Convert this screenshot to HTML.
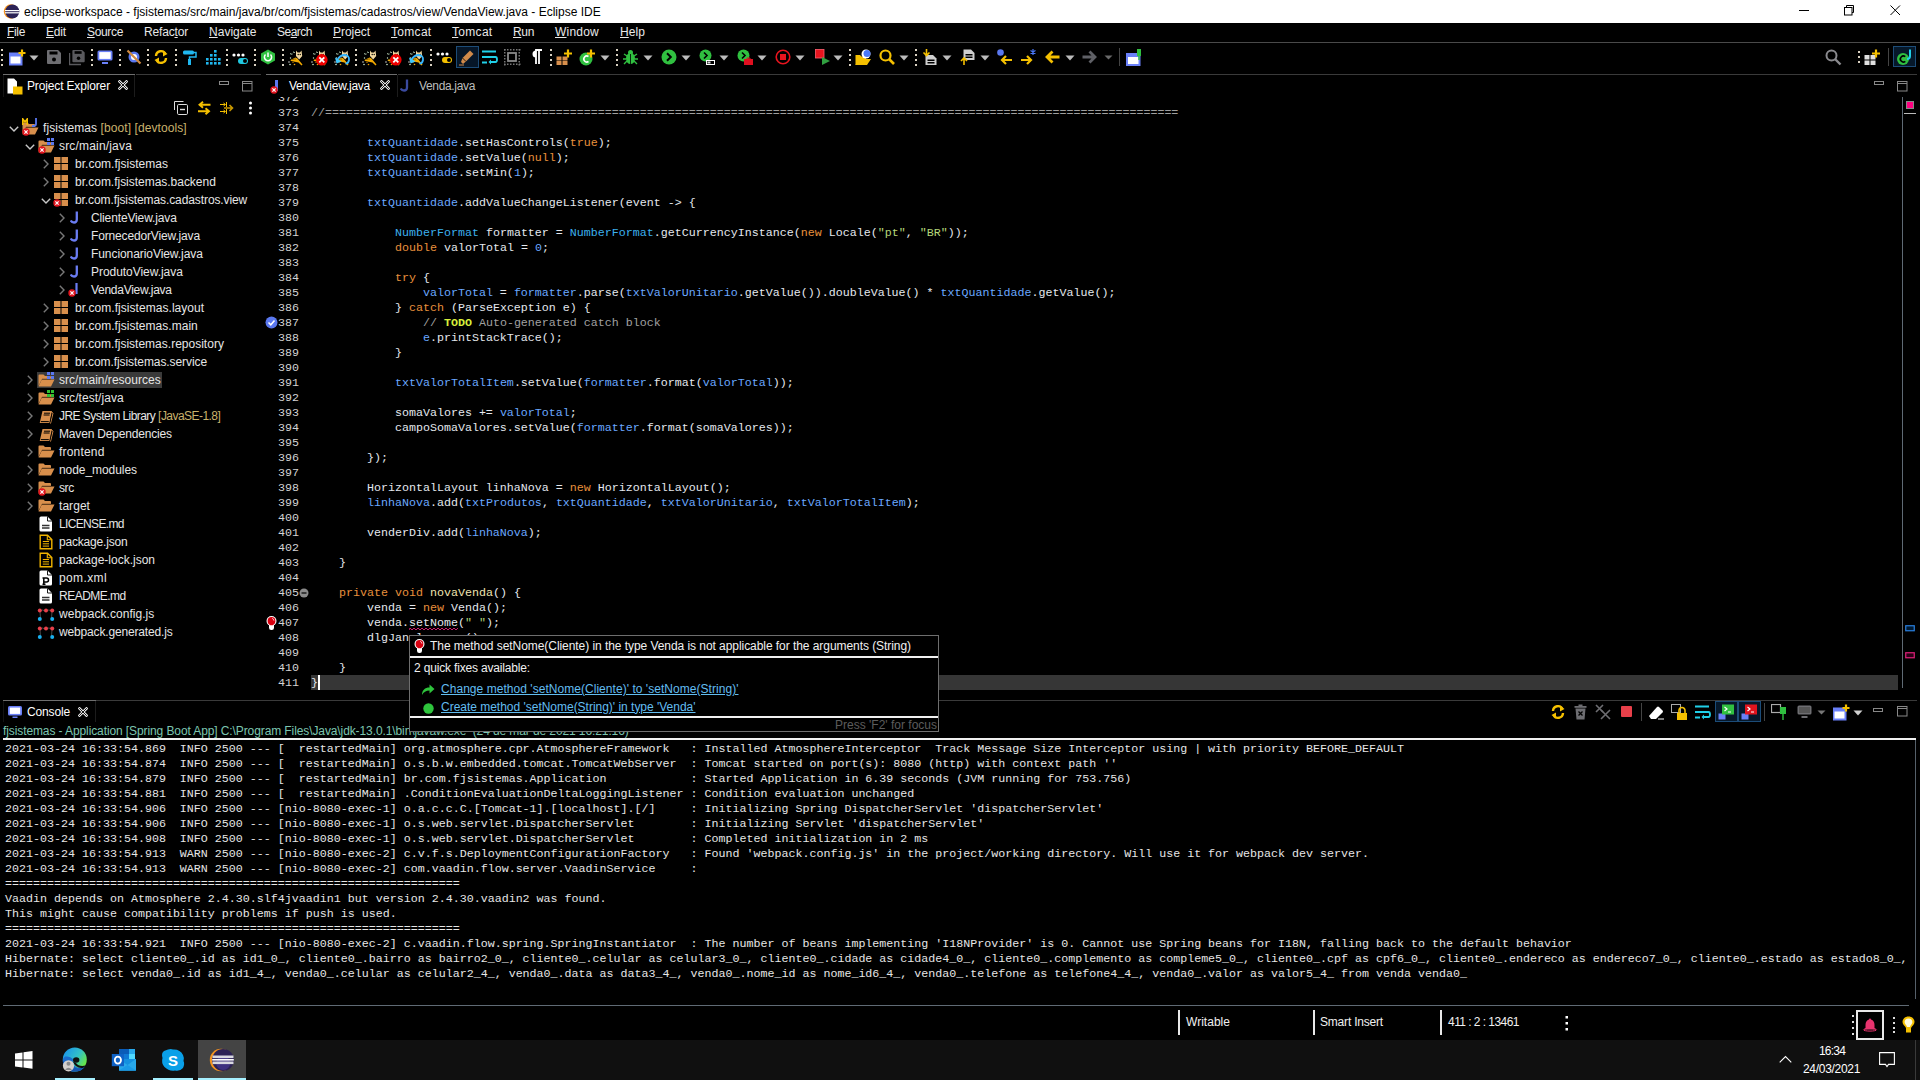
<!DOCTYPE html><html><head><meta charset="utf-8"><style>
html,body{margin:0;padding:0;background:#000;width:1920px;height:1080px;overflow:hidden;position:relative}
u{text-decoration:underline;text-underline-offset:1px}
</style></head><body><div style="position:absolute;left:0px;top:0px;width:1920px;height:23px;background:#fff;"></div>
<svg style="position:absolute;left:3px;top:3px;" width="17" height="17" viewBox="0 0 17 17"><circle cx="8" cy="8.5" r="7.2" fill="#f7941e"/><circle cx="9.3" cy="8.5" r="7" fill="#2c2255"/><rect x="2" y="7" width="14" height="1.2" fill="#fff"/><rect x="2" y="9.2" width="14" height="1.2" fill="#fff"/></svg>
<div style="position:absolute;left:24px;top:5.800000000000001px;font:12px/12px 'Liberation Sans', sans-serif;color:#000;white-space:pre;">eclipse-workspace - fjsistemas/src/main/java/br/com/fjsistemas/cadastros/view/VendaView.java - Eclipse IDE</div>
<div style="position:absolute;left:1799px;top:10px;width:10px;height:1px;background:#000;"></div>
<svg style="position:absolute;left:1844px;top:5px;" width="11" height="11" viewBox="0 0 11 11"><rect x="0.5" y="2.5" width="7.5" height="7.5" fill="none" stroke="#000"/><path d="M2.5 2.5V0.5H9.5V7.5H8" fill="none" stroke="#000"/></svg>
<svg style="position:absolute;left:1890px;top:5px;" width="11" height="11" viewBox="0 0 11 11"><path d="M0.5 0.5L10 10M10 0.5L0.5 10" stroke="#000" stroke-width="1"/></svg>
<div style="position:absolute;left:0px;top:23px;width:1920px;height:19px;background:#000;"></div>
<div style="position:absolute;left:0px;top:42px;width:1920px;height:1px;background:#4a4a4a;"></div>
<div style="position:absolute;left:7px;top:25.8px;font:12px/12px 'Liberation Sans', sans-serif;color:#e8e8e8;white-space:pre;letter-spacing:-0.334px;"><u>F</u>ile</div>
<div style="position:absolute;left:46px;top:25.8px;font:12px/12px 'Liberation Sans', sans-serif;color:#e8e8e8;white-space:pre;letter-spacing:-0.169px;"><u>E</u>dit</div>
<div style="position:absolute;left:87px;top:25.8px;font:12px/12px 'Liberation Sans', sans-serif;color:#e8e8e8;white-space:pre;letter-spacing:-0.337px;"><u>S</u>ource</div>
<div style="position:absolute;left:144px;top:25.8px;font:12px/12px 'Liberation Sans', sans-serif;color:#e8e8e8;white-space:pre;letter-spacing:-0.169px;">Refac<u>t</u>or</div>
<div style="position:absolute;left:209px;top:25.8px;font:12px/12px 'Liberation Sans', sans-serif;color:#e8e8e8;white-space:pre;letter-spacing:0.017px;"><u>N</u>avigate</div>
<div style="position:absolute;left:277px;top:25.8px;font:12px/12px 'Liberation Sans', sans-serif;color:#e8e8e8;white-space:pre;letter-spacing:-0.504px;">Se<u>a</u>rch</div>
<div style="position:absolute;left:333px;top:25.8px;font:12px/12px 'Liberation Sans', sans-serif;color:#e8e8e8;white-space:pre;letter-spacing:-0.050px;"><u>P</u>roject</div>
<div style="position:absolute;left:391px;top:25.8px;font:12px/12px 'Liberation Sans', sans-serif;color:#e8e8e8;white-space:pre;letter-spacing:0.304px;"><u>T</u>omcat</div>
<div style="position:absolute;left:452px;top:25.8px;font:12px/12px 'Liberation Sans', sans-serif;color:#e8e8e8;white-space:pre;letter-spacing:0.304px;"><u>T</u>omcat</div>
<div style="position:absolute;left:513px;top:25.8px;font:12px/12px 'Liberation Sans', sans-serif;color:#e8e8e8;white-space:pre;letter-spacing:-0.338px;"><u>R</u>un</div>
<div style="position:absolute;left:555px;top:25.8px;font:12px/12px 'Liberation Sans', sans-serif;color:#e8e8e8;white-space:pre;letter-spacing:0.220px;"><u>W</u>indow</div>
<div style="position:absolute;left:620px;top:25.8px;font:12px/12px 'Liberation Sans', sans-serif;color:#e8e8e8;white-space:pre;letter-spacing:0.080px;"><u>H</u>elp</div>
<div style="position:absolute;left:3px;top:74px;width:132px;height:1px;background:#6e6e6e;"></div>
<div style="position:absolute;left:134px;top:75px;width:1px;height:22px;background:#1c1c1c;"></div>
<div style="position:absolute;left:3px;top:75px;width:1px;height:22px;background:#141414;"></div>
<div style="position:absolute;left:136px;top:74px;width:125px;height:1px;background:#3a3a3a;"></div>
<svg style="position:absolute;left:7px;top:78px;" width="16" height="17" viewBox="0 0 16 17"><path d="M0.5 0.5H7L10 3.5V9H6V15.5H0.5Z" fill="#fff"/><path d="M6 8.5H15.5V16.5H6Z" fill="#f5c000"/></svg>
<div style="position:absolute;left:27px;top:79.8px;font:12px/12px 'Liberation Sans', sans-serif;color:#fff;white-space:pre;letter-spacing:-0.148px;">Project Explorer</div>
<svg style="position:absolute;left:118px;top:80px;" width="10" height="10" viewBox="0 0 10 10"><path d="M1.5 1.5L8.5 8.5M8.5 1.5L1.5 8.5" stroke="#e8e8e8" stroke-width="2.6" stroke-linecap="square"/><path d="M1.5 1.5L8.5 8.5M8.5 1.5L1.5 8.5" stroke="#000" stroke-width="0.9" stroke-linecap="square"/></svg>
<svg style="position:absolute;left:219px;top:81px;" width="11" height="5" viewBox="0 0 11 5"><rect x="0.5" y="0.5" width="9" height="3" fill="none" stroke="#888"/></svg>
<svg style="position:absolute;left:242px;top:81px;" width="11" height="11" viewBox="0 0 11 11"><rect x="0.5" y="0.5" width="9.5" height="9.5" fill="none" stroke="#888"/><path d="M0.5 2.5H10" stroke="#888"/></svg>
<svg style="position:absolute;left:173px;top:100px;" width="16" height="16" viewBox="0 0 16 16"><path d="M1.5 10V1.5H10.5" fill="none" stroke="#ddd" stroke-width="1"/><rect x="4.5" y="4.5" width="10" height="10" rx="1.2" fill="#000" stroke="#ddd" stroke-width="1"/><path d="M7 9.5H12" stroke="#ddd" stroke-width="1.4"/></svg>
<svg style="position:absolute;left:197px;top:101px;" width="16" height="14" viewBox="0 0 16 14"><path d="M13.5 3.8H3M6 0.8L2.5 3.8L6 6.8M1 10.2H11.5M8.5 7.2L12 10.2L8.5 13.2" fill="none" stroke="#f5c000" stroke-width="1.9"/></svg>
<svg style="position:absolute;left:219px;top:101px;" width="16" height="14" viewBox="0 0 16 14"><path d="M1 3.5H6M1 10.5H6M4.5 2L6.5 3.5L4.5 5M4.5 9L6.5 10.5L4.5 12M7.5 1V6M7.5 8V13" fill="none" stroke="#f5c000" stroke-width="1"/><path d="M5 7H13M10.5 4L13.5 7L10.5 10" fill="none" stroke="#c89800" stroke-width="1.6"/></svg>
<svg style="position:absolute;left:248px;top:101px;" width="5" height="14" viewBox="0 0 5 14"><circle cx="2.5" cy="2" r="1.5" fill="#fff"/><circle cx="2.5" cy="7" r="1.5" fill="#fff"/><circle cx="2.5" cy="12" r="1.5" fill="#fff"/></svg>
<svg style="position:absolute;left:9px;top:126px;" width="10" height="6" viewBox="0 0 10 6"><path d="M0.8 0.8L5 5L9.2 0.8" fill="none" stroke="#c8c8c8" stroke-width="1.4"/></svg>
<svg style="position:absolute;left:22px;top:121px;" width="17" height="15" viewBox="0 0 17 15"><path d="M0.5 2.5Q0.5 1.5 1.5 1.5H5.5L7 3H12Q13 3 13 4V6H4L0.5 13Z" fill="#d88f4c"/><path d="M3.8 6.5H16.5L13 13.5H0.5Z" fill="#d88f4c"/><path d="M4 6.2H13" stroke="#5a3a1a" stroke-width="0.8"/></svg>
<svg style="position:absolute;left:22px;top:118px;" width="17" height="9" viewBox="0 0 17 9"><path d="M0.8 7V1L3 4L5.2 1V7" fill="none" stroke="#f5c000" stroke-width="1.6"/><path d="M14 0V6Q14 8 11.5 8H10" fill="none" stroke="#5a78f0" stroke-width="1.8"/></svg>
<svg style="position:absolute;left:22px;top:128px;" width="8" height="8" viewBox="0 0 8 8"><circle cx="4" cy="4" r="3.7" fill="#e0141e"/><path d="M2.4 2.4L5.6 5.6M5.6 2.4L2.4 5.6" stroke="#fff" stroke-width="1.2"/></svg>
<div style="position:absolute;left:43px;top:121.8px;font:12px/12px 'Liberation Sans', sans-serif;color:#e6e6e6;white-space:pre;letter-spacing:0.082px;">fjsistemas<span style="color:#c9b26d"> [boot] [devtools]</span></div>
<svg style="position:absolute;left:25px;top:144px;" width="10" height="6" viewBox="0 0 10 6"><path d="M0.8 0.8L5 5L9.2 0.8" fill="none" stroke="#c8c8c8" stroke-width="1.4"/></svg>
<svg style="position:absolute;left:38px;top:139px;" width="17" height="15" viewBox="0 0 17 15"><path d="M0.5 2.5Q0.5 1.5 1.5 1.5H5.5L7 3H12Q13 3 13 4V6H4L0.5 13Z" fill="#d88f4c"/><path d="M3.8 6.5H16.5L13 13.5H0.5Z" fill="#d88f4c"/><path d="M4 6.2H13" stroke="#5a3a1a" stroke-width="0.8"/></svg>
<svg style="position:absolute;left:47px;top:138px;" width="7" height="7" viewBox="0 0 7 7"><rect x="0" y="0" width="3" height="3" fill="#5a78f0"/><rect x="4" y="0" width="3" height="3" fill="#5a78f0"/><rect x="0" y="4" width="3" height="3" fill="#5a78f0"/><rect x="4" y="4" width="3" height="3" fill="#5a78f0"/></svg>
<svg style="position:absolute;left:38px;top:146px;" width="8" height="8" viewBox="0 0 8 8"><circle cx="4" cy="4" r="3.7" fill="#e0141e"/><path d="M2.4 2.4L5.6 5.6M5.6 2.4L2.4 5.6" stroke="#fff" stroke-width="1.2"/></svg>
<div style="position:absolute;left:59px;top:139.8px;font:12px/12px 'Liberation Sans', sans-serif;color:#e6e6e6;white-space:pre;letter-spacing:0.178px;">src/main/java</div>
<svg style="position:absolute;left:43px;top:159px;" width="6" height="10" viewBox="0 0 6 10"><path d="M0.8 0.8L5 5L0.8 9.2" fill="none" stroke="#787878" stroke-width="1.4"/></svg>
<svg style="position:absolute;left:54px;top:157px;" width="14" height="13" viewBox="0 0 14 13"><rect x="0" y="0" width="6.5" height="6" fill="#d88f4c"/><rect x="7.5" y="0" width="6.5" height="6" fill="#d88f4c"/><rect x="0" y="7" width="6.5" height="6" fill="#d88f4c"/><rect x="7.5" y="7" width="6.5" height="6" fill="#d88f4c"/></svg>
<div style="position:absolute;left:75px;top:157.8px;font:12px/12px 'Liberation Sans', sans-serif;color:#e6e6e6;white-space:pre;letter-spacing:0.018px;">br.com.fjsistemas</div>
<svg style="position:absolute;left:43px;top:177px;" width="6" height="10" viewBox="0 0 6 10"><path d="M0.8 0.8L5 5L0.8 9.2" fill="none" stroke="#787878" stroke-width="1.4"/></svg>
<svg style="position:absolute;left:54px;top:175px;" width="14" height="13" viewBox="0 0 14 13"><rect x="0" y="0" width="6.5" height="6" fill="#d88f4c"/><rect x="7.5" y="0" width="6.5" height="6" fill="#d88f4c"/><rect x="0" y="7" width="6.5" height="6" fill="#d88f4c"/><rect x="7.5" y="7" width="6.5" height="6" fill="#d88f4c"/></svg>
<div style="position:absolute;left:75px;top:175.8px;font:12px/12px 'Liberation Sans', sans-serif;color:#e6e6e6;white-space:pre;letter-spacing:-0.024px;">br.com.fjsistemas.backend</div>
<svg style="position:absolute;left:41px;top:198px;" width="10" height="6" viewBox="0 0 10 6"><path d="M0.8 0.8L5 5L9.2 0.8" fill="none" stroke="#c8c8c8" stroke-width="1.4"/></svg>
<svg style="position:absolute;left:54px;top:193px;" width="14" height="13" viewBox="0 0 14 13"><rect x="0" y="0" width="6.5" height="6" fill="#d88f4c"/><rect x="7.5" y="0" width="6.5" height="6" fill="#d88f4c"/><rect x="0" y="7" width="6.5" height="6" fill="#d88f4c"/><rect x="7.5" y="7" width="6.5" height="6" fill="#d88f4c"/></svg>
<svg style="position:absolute;left:53px;top:199px;" width="8" height="8" viewBox="0 0 8 8"><circle cx="4" cy="4" r="3.7" fill="#e0141e"/><path d="M2.4 2.4L5.6 5.6M5.6 2.4L2.4 5.6" stroke="#fff" stroke-width="1.2"/></svg>
<div style="position:absolute;left:75px;top:193.8px;font:12px/12px 'Liberation Sans', sans-serif;color:#e6e6e6;white-space:pre;letter-spacing:-0.100px;">br.com.fjsistemas.cadastros.view</div>
<svg style="position:absolute;left:59px;top:213px;" width="6" height="10" viewBox="0 0 6 10"><path d="M0.8 0.8L5 5L0.8 9.2" fill="none" stroke="#787878" stroke-width="1.4"/></svg>
<svg style="position:absolute;left:70px;top:211px;" width="10" height="13" viewBox="0 0 10 13"><path d="M6.8 0.5V8.5Q6.8 11.5 4 11.5Q1.5 11.5 0.8 9.5" stroke="#6a7cf2" stroke-width="2.3" fill="none"/></svg>
<div style="position:absolute;left:91px;top:211.8px;font:12px/12px 'Liberation Sans', sans-serif;color:#e6e6e6;white-space:pre;letter-spacing:-0.133px;">ClienteView.java</div>
<svg style="position:absolute;left:59px;top:231px;" width="6" height="10" viewBox="0 0 6 10"><path d="M0.8 0.8L5 5L0.8 9.2" fill="none" stroke="#787878" stroke-width="1.4"/></svg>
<svg style="position:absolute;left:70px;top:229px;" width="10" height="13" viewBox="0 0 10 13"><path d="M6.8 0.5V8.5Q6.8 11.5 4 11.5Q1.5 11.5 0.8 9.5" stroke="#6a7cf2" stroke-width="2.3" fill="none"/></svg>
<div style="position:absolute;left:91px;top:229.8px;font:12px/12px 'Liberation Sans', sans-serif;color:#e6e6e6;white-space:pre;letter-spacing:-0.150px;">FornecedorView.java</div>
<svg style="position:absolute;left:59px;top:249px;" width="6" height="10" viewBox="0 0 6 10"><path d="M0.8 0.8L5 5L0.8 9.2" fill="none" stroke="#787878" stroke-width="1.4"/></svg>
<svg style="position:absolute;left:70px;top:247px;" width="10" height="13" viewBox="0 0 10 13"><path d="M6.8 0.5V8.5Q6.8 11.5 4 11.5Q1.5 11.5 0.8 9.5" stroke="#6a7cf2" stroke-width="2.3" fill="none"/></svg>
<div style="position:absolute;left:91px;top:247.8px;font:12px/12px 'Liberation Sans', sans-serif;color:#e6e6e6;white-space:pre;letter-spacing:-0.069px;">FuncionarioView.java</div>
<svg style="position:absolute;left:59px;top:267px;" width="6" height="10" viewBox="0 0 6 10"><path d="M0.8 0.8L5 5L0.8 9.2" fill="none" stroke="#787878" stroke-width="1.4"/></svg>
<svg style="position:absolute;left:70px;top:265px;" width="10" height="13" viewBox="0 0 10 13"><path d="M6.8 0.5V8.5Q6.8 11.5 4 11.5Q1.5 11.5 0.8 9.5" stroke="#6a7cf2" stroke-width="2.3" fill="none"/></svg>
<div style="position:absolute;left:91px;top:265.8px;font:12px/12px 'Liberation Sans', sans-serif;color:#e6e6e6;white-space:pre;letter-spacing:-0.044px;">ProdutoView.java</div>
<svg style="position:absolute;left:59px;top:285px;" width="6" height="10" viewBox="0 0 6 10"><path d="M0.8 0.8L5 5L0.8 9.2" fill="none" stroke="#787878" stroke-width="1.4"/></svg>
<svg style="position:absolute;left:70px;top:283px;" width="10" height="13" viewBox="0 0 10 13"><path d="M6.5 0V11" stroke="#6a7cf2" stroke-width="2.2" fill="none"/></svg>
<svg style="position:absolute;left:68px;top:289px;" width="8" height="8" viewBox="0 0 8 8"><circle cx="4" cy="4" r="3.7" fill="#e0141e"/><path d="M2.4 2.4L5.6 5.6M5.6 2.4L2.4 5.6" stroke="#fff" stroke-width="1.2"/></svg>
<div style="position:absolute;left:91px;top:283.8px;font:12px/12px 'Liberation Sans', sans-serif;color:#e6e6e6;white-space:pre;letter-spacing:-0.273px;">VendaView.java</div>
<svg style="position:absolute;left:43px;top:303px;" width="6" height="10" viewBox="0 0 6 10"><path d="M0.8 0.8L5 5L0.8 9.2" fill="none" stroke="#787878" stroke-width="1.4"/></svg>
<svg style="position:absolute;left:54px;top:301px;" width="14" height="13" viewBox="0 0 14 13"><rect x="0" y="0" width="6.5" height="6" fill="#d88f4c"/><rect x="7.5" y="0" width="6.5" height="6" fill="#d88f4c"/><rect x="0" y="7" width="6.5" height="6" fill="#d88f4c"/><rect x="7.5" y="7" width="6.5" height="6" fill="#d88f4c"/></svg>
<div style="position:absolute;left:75px;top:301.8px;font:12px/12px 'Liberation Sans', sans-serif;color:#e6e6e6;white-space:pre;letter-spacing:0.048px;">br.com.fjsistemas.layout</div>
<svg style="position:absolute;left:43px;top:321px;" width="6" height="10" viewBox="0 0 6 10"><path d="M0.8 0.8L5 5L0.8 9.2" fill="none" stroke="#787878" stroke-width="1.4"/></svg>
<svg style="position:absolute;left:54px;top:319px;" width="14" height="13" viewBox="0 0 14 13"><rect x="0" y="0" width="6.5" height="6" fill="#d88f4c"/><rect x="7.5" y="0" width="6.5" height="6" fill="#d88f4c"/><rect x="0" y="7" width="6.5" height="6" fill="#d88f4c"/><rect x="7.5" y="7" width="6.5" height="6" fill="#d88f4c"/></svg>
<div style="position:absolute;left:75px;top:319.8px;font:12px/12px 'Liberation Sans', sans-serif;color:#e6e6e6;white-space:pre;letter-spacing:0.035px;">br.com.fjsistemas.main</div>
<svg style="position:absolute;left:43px;top:339px;" width="6" height="10" viewBox="0 0 6 10"><path d="M0.8 0.8L5 5L0.8 9.2" fill="none" stroke="#787878" stroke-width="1.4"/></svg>
<svg style="position:absolute;left:54px;top:337px;" width="14" height="13" viewBox="0 0 14 13"><rect x="0" y="0" width="6.5" height="6" fill="#d88f4c"/><rect x="7.5" y="0" width="6.5" height="6" fill="#d88f4c"/><rect x="0" y="7" width="6.5" height="6" fill="#d88f4c"/><rect x="7.5" y="7" width="6.5" height="6" fill="#d88f4c"/></svg>
<div style="position:absolute;left:75px;top:337.8px;font:12px/12px 'Liberation Sans', sans-serif;color:#e6e6e6;white-space:pre;letter-spacing:0.007px;">br.com.fjsistemas.repository</div>
<svg style="position:absolute;left:43px;top:357px;" width="6" height="10" viewBox="0 0 6 10"><path d="M0.8 0.8L5 5L0.8 9.2" fill="none" stroke="#787878" stroke-width="1.4"/></svg>
<svg style="position:absolute;left:54px;top:355px;" width="14" height="13" viewBox="0 0 14 13"><rect x="0" y="0" width="6.5" height="6" fill="#d88f4c"/><rect x="7.5" y="0" width="6.5" height="6" fill="#d88f4c"/><rect x="0" y="7" width="6.5" height="6" fill="#d88f4c"/><rect x="7.5" y="7" width="6.5" height="6" fill="#d88f4c"/></svg>
<div style="position:absolute;left:75px;top:355.8px;font:12px/12px 'Liberation Sans', sans-serif;color:#e6e6e6;white-space:pre;letter-spacing:-0.081px;">br.com.fjsistemas.service</div>
<svg style="position:absolute;left:27px;top:375px;" width="6" height="10" viewBox="0 0 6 10"><path d="M0.8 0.8L5 5L0.8 9.2" fill="none" stroke="#787878" stroke-width="1.4"/></svg>
<div style="position:absolute;left:37px;top:372px;width:125px;height:16px;background:#3a3a3a;"></div>
<svg style="position:absolute;left:38px;top:373px;" width="17" height="15" viewBox="0 0 17 15"><path d="M0.5 2.5Q0.5 1.5 1.5 1.5H5.5L7 3H12Q13 3 13 4V6H4L0.5 13Z" fill="#d88f4c"/><path d="M3.8 6.5H16.5L13 13.5H0.5Z" fill="#d88f4c"/><path d="M4 6.2H13" stroke="#5a3a1a" stroke-width="0.8"/></svg>
<svg style="position:absolute;left:47px;top:372px;" width="7" height="7" viewBox="0 0 7 7"><rect x="0" y="0" width="3" height="3" fill="#5a78f0"/><rect x="4" y="0" width="3" height="3" fill="#5a78f0"/><rect x="0" y="4" width="3" height="3" fill="#5a78f0"/><rect x="4" y="4" width="3" height="3" fill="#5a78f0"/></svg>
<div style="position:absolute;left:59px;top:373.8px;font:12px/12px 'Liberation Sans', sans-serif;color:#e6e6e6;white-space:pre;letter-spacing:0.022px;">src/main/resources</div>
<svg style="position:absolute;left:27px;top:393px;" width="6" height="10" viewBox="0 0 6 10"><path d="M0.8 0.8L5 5L0.8 9.2" fill="none" stroke="#787878" stroke-width="1.4"/></svg>
<svg style="position:absolute;left:38px;top:391px;" width="17" height="15" viewBox="0 0 17 15"><path d="M0.5 2.5Q0.5 1.5 1.5 1.5H5.5L7 3H12Q13 3 13 4V6H4L0.5 13Z" fill="#d88f4c"/><path d="M3.8 6.5H16.5L13 13.5H0.5Z" fill="#d88f4c"/><path d="M4 6.2H13" stroke="#5a3a1a" stroke-width="0.8"/></svg>
<svg style="position:absolute;left:47px;top:390px;" width="7" height="7" viewBox="0 0 7 7"><rect x="0" y="0" width="3" height="3" fill="#30c030"/><rect x="4" y="0" width="3" height="3" fill="#30c030"/><rect x="0" y="4" width="3" height="3" fill="#30c030"/><rect x="4" y="4" width="3" height="3" fill="#30c030"/></svg>
<div style="position:absolute;left:59px;top:391.8px;font:12px/12px 'Liberation Sans', sans-serif;color:#e6e6e6;white-space:pre;letter-spacing:0.056px;">src/test/java</div>
<svg style="position:absolute;left:27px;top:411px;" width="6" height="10" viewBox="0 0 6 10"><path d="M0.8 0.8L5 5L0.8 9.2" fill="none" stroke="#787878" stroke-width="1.4"/></svg>
<svg style="position:absolute;left:39px;top:410px;" width="15" height="14" viewBox="0 0 15 14"><path d="M3.5 1H12.5Q13 1 13 1.5L10.5 12.5Q10.4 13 10 13H1.2Q0.6 13 0.8 12.4Z" fill="#d88f4c"/><path d="M13 2.5L14 3L11.5 13.5" stroke="#d88f4c" stroke-width="1" fill="none"/><path d="M5 3.2H11M4.6 5H10.6M1.8 11.6H9.8" stroke="#000" stroke-width="1"/><path d="M11 12.5L13 3" stroke="#000" stroke-width="0.7"/></svg>
<div style="position:absolute;left:59px;top:409.8px;font:12px/12px 'Liberation Sans', sans-serif;color:#e6e6e6;white-space:pre;letter-spacing:-0.541px;">JRE System Library<span style="color:#c9b26d"> [JavaSE-1.8]</span></div>
<svg style="position:absolute;left:27px;top:429px;" width="6" height="10" viewBox="0 0 6 10"><path d="M0.8 0.8L5 5L0.8 9.2" fill="none" stroke="#787878" stroke-width="1.4"/></svg>
<svg style="position:absolute;left:39px;top:428px;" width="15" height="14" viewBox="0 0 15 14"><path d="M3.5 1H12.5Q13 1 13 1.5L10.5 12.5Q10.4 13 10 13H1.2Q0.6 13 0.8 12.4Z" fill="#d88f4c"/><path d="M13 2.5L14 3L11.5 13.5" stroke="#d88f4c" stroke-width="1" fill="none"/><path d="M5 3.2H11M4.6 5H10.6M1.8 11.6H9.8" stroke="#000" stroke-width="1"/><path d="M11 12.5L13 3" stroke="#000" stroke-width="0.7"/></svg>
<div style="position:absolute;left:59px;top:427.8px;font:12px/12px 'Liberation Sans', sans-serif;color:#e6e6e6;white-space:pre;letter-spacing:-0.176px;">Maven Dependencies</div>
<svg style="position:absolute;left:27px;top:447px;" width="6" height="10" viewBox="0 0 6 10"><path d="M0.8 0.8L5 5L0.8 9.2" fill="none" stroke="#787878" stroke-width="1.4"/></svg>
<svg style="position:absolute;left:38px;top:444px;" width="17" height="15" viewBox="0 0 17 15"><path d="M0.5 2.5Q0.5 1.5 1.5 1.5H5.5L7 3H12Q13 3 13 4V6H4L0.5 13Z" fill="#d88f4c"/><path d="M3.8 6.5H16.5L13 13.5H0.5Z" fill="#d88f4c"/><path d="M4 6.2H13" stroke="#5a3a1a" stroke-width="0.8"/></svg>
<div style="position:absolute;left:59px;top:445.8px;font:12px/12px 'Liberation Sans', sans-serif;color:#e6e6e6;white-space:pre;letter-spacing:0.183px;">frontend</div>
<svg style="position:absolute;left:27px;top:465px;" width="6" height="10" viewBox="0 0 6 10"><path d="M0.8 0.8L5 5L0.8 9.2" fill="none" stroke="#787878" stroke-width="1.4"/></svg>
<svg style="position:absolute;left:38px;top:462px;" width="17" height="15" viewBox="0 0 17 15"><path d="M0.5 2.5Q0.5 1.5 1.5 1.5H5.5L7 3H12Q13 3 13 4V6H4L0.5 13Z" fill="#d88f4c"/><path d="M3.8 6.5H16.5L13 13.5H0.5Z" fill="#d88f4c"/><path d="M4 6.2H13" stroke="#5a3a1a" stroke-width="0.8"/></svg>
<div style="position:absolute;left:59px;top:463.8px;font:12px/12px 'Liberation Sans', sans-serif;color:#e6e6e6;white-space:pre;letter-spacing:-0.061px;">node_modules</div>
<svg style="position:absolute;left:27px;top:483px;" width="6" height="10" viewBox="0 0 6 10"><path d="M0.8 0.8L5 5L0.8 9.2" fill="none" stroke="#787878" stroke-width="1.4"/></svg>
<svg style="position:absolute;left:38px;top:480px;" width="17" height="15" viewBox="0 0 17 15"><path d="M0.5 2.5Q0.5 1.5 1.5 1.5H5.5L7 3H12Q13 3 13 4V6H4L0.5 13Z" fill="#d88f4c"/><path d="M3.8 6.5H16.5L13 13.5H0.5Z" fill="#d88f4c"/><path d="M4 6.2H13" stroke="#5a3a1a" stroke-width="0.8"/></svg>
<svg style="position:absolute;left:38px;top:488px;" width="8" height="8" viewBox="0 0 8 8"><circle cx="4" cy="4" r="3.7" fill="#e0141e"/><path d="M2.4 2.4L5.6 5.6M5.6 2.4L2.4 5.6" stroke="#fff" stroke-width="1.2"/></svg>
<div style="position:absolute;left:59px;top:481.8px;font:12px/12px 'Liberation Sans', sans-serif;color:#e6e6e6;white-space:pre;letter-spacing:-0.415px;">src</div>
<svg style="position:absolute;left:27px;top:501px;" width="6" height="10" viewBox="0 0 6 10"><path d="M0.8 0.8L5 5L0.8 9.2" fill="none" stroke="#787878" stroke-width="1.4"/></svg>
<svg style="position:absolute;left:38px;top:498px;" width="17" height="15" viewBox="0 0 17 15"><path d="M0.5 2.5Q0.5 1.5 1.5 1.5H5.5L7 3H12Q13 3 13 4V6H4L0.5 13Z" fill="#d88f4c"/><path d="M3.8 6.5H16.5L13 13.5H0.5Z" fill="#d88f4c"/><path d="M4 6.2H13" stroke="#5a3a1a" stroke-width="0.8"/></svg>
<div style="position:absolute;left:59px;top:499.8px;font:12px/12px 'Liberation Sans', sans-serif;color:#e6e6e6;white-space:pre;letter-spacing:0.052px;">target</div>
<svg style="position:absolute;left:39px;top:516px;" width="14" height="16" viewBox="0 0 14 16"><path d="M2 0.5H8.5L13 5V14Q13 15.5 11.5 15.5H2Q0.5 15.5 0.5 14V2Q0.5 0.5 2 0.5Z" fill="#fff"/><path d="M8.5 0.5V5H13" fill="none" stroke="#000" stroke-width="0.9"/><path d="M3 9.5H10.5M3 12H10.5" stroke="#333" stroke-width="1.3"/></svg>
<div style="position:absolute;left:59px;top:517.8px;font:12px/12px 'Liberation Sans', sans-serif;color:#e6e6e6;white-space:pre;letter-spacing:-0.661px;">LICENSE.md</div>
<svg style="position:absolute;left:39px;top:534px;" width="14" height="16" viewBox="0 0 14 16"><path d="M1.2 1.2H8.5L12.8 5.5V14.8H1.2Z" fill="none" stroke="#f0b400" stroke-width="1.4"/><path d="M8.3 1.2V5.7H12.8" fill="none" stroke="#f0b400" stroke-width="1.1"/><path d="M3.8 7.5H10M3.8 9.8H10M3.8 12.1H10" stroke="#f0b400" stroke-width="1"/></svg>
<div style="position:absolute;left:59px;top:535.8px;font:12px/12px 'Liberation Sans', sans-serif;color:#e6e6e6;white-space:pre;letter-spacing:-0.185px;">package.json</div>
<svg style="position:absolute;left:39px;top:552px;" width="14" height="16" viewBox="0 0 14 16"><path d="M1.2 1.2H8.5L12.8 5.5V14.8H1.2Z" fill="none" stroke="#f0b400" stroke-width="1.4"/><path d="M8.3 1.2V5.7H12.8" fill="none" stroke="#f0b400" stroke-width="1.1"/><path d="M3.8 7.5H10M3.8 9.8H10M3.8 12.1H10" stroke="#f0b400" stroke-width="1"/></svg>
<div style="position:absolute;left:59px;top:553.8px;font:12px/12px 'Liberation Sans', sans-serif;color:#e6e6e6;white-space:pre;letter-spacing:-0.003px;">package-lock.json</div>
<svg style="position:absolute;left:39px;top:570px;" width="14" height="16" viewBox="0 0 14 16"><path d="M2 0.5H8.5L13 5V14Q13 15.5 11.5 15.5H2Q0.5 15.5 0.5 14V2Q0.5 0.5 2 0.5Z" fill="#fff"/><path d="M8.5 0.5V5H13" fill="none" stroke="#000" stroke-width="0.9"/><path d="M3.5 8H7.5Q9.5 8 9.5 10Q9.5 12 7.5 12H5.5M4.8 8V14.3M3.5 14.3H6.5" fill="none" stroke="#000" stroke-width="1.5"/></svg>
<div style="position:absolute;left:59px;top:571.8px;font:12px/12px 'Liberation Sans', sans-serif;color:#e6e6e6;white-space:pre;letter-spacing:0.380px;">pom.xml</div>
<svg style="position:absolute;left:39px;top:588px;" width="14" height="16" viewBox="0 0 14 16"><path d="M2 0.5H8.5L13 5V14Q13 15.5 11.5 15.5H2Q0.5 15.5 0.5 14V2Q0.5 0.5 2 0.5Z" fill="#fff"/><path d="M8.5 0.5V5H13" fill="none" stroke="#000" stroke-width="0.9"/><path d="M3 9.5H10.5M3 12H10.5" stroke="#333" stroke-width="1.3"/></svg>
<div style="position:absolute;left:59px;top:589.8px;font:12px/12px 'Liberation Sans', sans-serif;color:#e6e6e6;white-space:pre;letter-spacing:-0.510px;">README.md</div>
<svg style="position:absolute;left:37px;top:607px;" width="18" height="15" viewBox="0 0 18 15"><path d="M3 4Q5 2 8.5 4Q12 2 15 4M3 4L3.5 12M15 4L14.5 12" stroke="#505050" stroke-width="0.9" fill="none"/><circle cx="2.8" cy="3.5" r="2" fill="#e8404a"/><circle cx="9" cy="3.5" r="2" fill="#e8404a"/><circle cx="15.2" cy="3.5" r="2" fill="#e8404a"/><circle cx="2.8" cy="12" r="2" fill="#18b0f0"/><circle cx="15.2" cy="12" r="2" fill="#18b0f0"/></svg>
<div style="position:absolute;left:59px;top:607.8px;font:12px/12px 'Liberation Sans', sans-serif;color:#e6e6e6;white-space:pre;letter-spacing:0.031px;">webpack.config.js</div>
<svg style="position:absolute;left:37px;top:625px;" width="18" height="15" viewBox="0 0 18 15"><path d="M3 4Q5 2 8.5 4Q12 2 15 4M3 4L3.5 12M15 4L14.5 12" stroke="#505050" stroke-width="0.9" fill="none"/><circle cx="2.8" cy="3.5" r="2" fill="#e8404a"/><circle cx="9" cy="3.5" r="2" fill="#e8404a"/><circle cx="15.2" cy="3.5" r="2" fill="#e8404a"/><circle cx="2.8" cy="12" r="2" fill="#18b0f0"/><circle cx="15.2" cy="12" r="2" fill="#18b0f0"/></svg>
<div style="position:absolute;left:59px;top:625.8px;font:12px/12px 'Liberation Sans', sans-serif;color:#e6e6e6;white-space:pre;letter-spacing:-0.162px;">webpack.generated.js</div>
<div style="position:absolute;left:266px;top:74px;width:131px;height:1px;background:#6e6e6e;"></div>
<div style="position:absolute;left:397px;top:75px;width:1px;height:22px;background:#1c1c1c;"></div>
<div style="position:absolute;left:398px;top:74px;width:1519px;height:1px;background:#3a3a3a;"></div>
<svg style="position:absolute;left:268px;top:77px;" width="12" height="17" viewBox="0 0 12 17"><path d="M8.5 3V14" stroke="#5a78f0" stroke-width="3"/></svg>
<svg style="position:absolute;left:270px;top:86px;" width="8" height="8" viewBox="0 0 8 8"><circle cx="4" cy="4" r="3.7" fill="#e0141e"/><path d="M2.4 2.4L5.6 5.6M5.6 2.4L2.4 5.6" stroke="#fff" stroke-width="1.2"/></svg>
<div style="position:absolute;left:289px;top:79.8px;font:12px/12px 'Liberation Sans', sans-serif;color:#fff;white-space:pre;letter-spacing:-0.251px;">VendaView.java</div>
<svg style="position:absolute;left:380px;top:80px;" width="10" height="10" viewBox="0 0 10 10"><path d="M1.5 1.5L8.5 8.5M8.5 1.5L1.5 8.5" stroke="#e8e8e8" stroke-width="2.6" stroke-linecap="square"/><path d="M1.5 1.5L8.5 8.5M8.5 1.5L1.5 8.5" stroke="#000" stroke-width="0.9" stroke-linecap="square"/></svg>
<svg style="position:absolute;left:400px;top:79px;" width="10" height="13" viewBox="0 0 10 13"><path d="M7 0.5V8.5Q7 11.5 4 11.5Q1.5 11.5 0.8 9.5" stroke="#3a4aa0" stroke-width="2.3" fill="none"/></svg>
<div style="position:absolute;left:419px;top:79.8px;font:12px/12px 'Liberation Sans', sans-serif;color:#bdbdbd;white-space:pre;letter-spacing:-0.338px;">Venda.java</div>
<svg style="position:absolute;left:1874px;top:81px;" width="11" height="5" viewBox="0 0 11 5"><rect x="0.5" y="0.5" width="9" height="3" fill="none" stroke="#888"/></svg>
<svg style="position:absolute;left:1897px;top:81px;" width="11" height="11" viewBox="0 0 11 11"><rect x="0.5" y="0.5" width="9.5" height="9.5" fill="none" stroke="#888"/><path d="M0.5 2.5H10" stroke="#888"/></svg>
<div style="position:absolute;left:311px;top:675px;width:1587px;height:15px;background:#363636;"></div>
<div style="position:absolute;left:262px;top:97px;width:1640px;height:593px;overflow:hidden">
<div style="position:absolute;left:0;top:-6px;width:37px;text-align:right;font:11.67px/15px 'Liberation Mono', monospace;color:#d4d4d4">372</div>
<div style="position:absolute;left:0;top:9px;width:37px;text-align:right;font:11.67px/15px 'Liberation Mono', monospace;color:#d4d4d4">373</div>
<div style="position:absolute;left:49px;top:9px;font:11.67px/15px 'Liberation Mono', monospace;color:#e4e8ee;white-space:pre"><span style="color:#a0a0a0">//==========================================================================================================================</span></div>
<div style="position:absolute;left:0;top:24px;width:37px;text-align:right;font:11.67px/15px 'Liberation Mono', monospace;color:#d4d4d4">374</div>
<div style="position:absolute;left:0;top:39px;width:37px;text-align:right;font:11.67px/15px 'Liberation Mono', monospace;color:#d4d4d4">375</div>
<div style="position:absolute;left:49px;top:39px;font:11.67px/15px 'Liberation Mono', monospace;color:#e4e8ee;white-space:pre">        <span style="color:#6aa8ff">txtQuantidade</span>.setHasControls(<span style="color:#e8903c">true</span>);</div>
<div style="position:absolute;left:0;top:54px;width:37px;text-align:right;font:11.67px/15px 'Liberation Mono', monospace;color:#d4d4d4">376</div>
<div style="position:absolute;left:49px;top:54px;font:11.67px/15px 'Liberation Mono', monospace;color:#e4e8ee;white-space:pre">        <span style="color:#6aa8ff">txtQuantidade</span>.setValue(<span style="color:#e8903c">null</span>);</div>
<div style="position:absolute;left:0;top:69px;width:37px;text-align:right;font:11.67px/15px 'Liberation Mono', monospace;color:#d4d4d4">377</div>
<div style="position:absolute;left:49px;top:69px;font:11.67px/15px 'Liberation Mono', monospace;color:#e4e8ee;white-space:pre">        <span style="color:#6aa8ff">txtQuantidade</span>.setMin(<span style="color:#6aa8ff">1</span>);</div>
<div style="position:absolute;left:0;top:84px;width:37px;text-align:right;font:11.67px/15px 'Liberation Mono', monospace;color:#d4d4d4">378</div>
<div style="position:absolute;left:0;top:99px;width:37px;text-align:right;font:11.67px/15px 'Liberation Mono', monospace;color:#d4d4d4">379</div>
<div style="position:absolute;left:49px;top:99px;font:11.67px/15px 'Liberation Mono', monospace;color:#e4e8ee;white-space:pre">        <span style="color:#6aa8ff">txtQuantidade</span>.addValueChangeListener(event -&gt; {</div>
<div style="position:absolute;left:0;top:114px;width:37px;text-align:right;font:11.67px/15px 'Liberation Mono', monospace;color:#d4d4d4">380</div>
<div style="position:absolute;left:0;top:129px;width:37px;text-align:right;font:11.67px/15px 'Liberation Mono', monospace;color:#d4d4d4">381</div>
<div style="position:absolute;left:49px;top:129px;font:11.67px/15px 'Liberation Mono', monospace;color:#e4e8ee;white-space:pre">            <span style="color:#3cb0ee">NumberFormat</span> formatter = <span style="color:#3cb0ee">NumberFormat</span>.getCurrencyInstance(<span style="color:#e8903c">new</span> Locale(<span style="color:#b4d77a">"pt"</span>, <span style="color:#b4d77a">"BR"</span>));</div>
<div style="position:absolute;left:0;top:144px;width:37px;text-align:right;font:11.67px/15px 'Liberation Mono', monospace;color:#d4d4d4">382</div>
<div style="position:absolute;left:49px;top:144px;font:11.67px/15px 'Liberation Mono', monospace;color:#e4e8ee;white-space:pre">            <span style="color:#e8903c">double</span> valorTotal = <span style="color:#6aa8ff">0</span>;</div>
<div style="position:absolute;left:0;top:159px;width:37px;text-align:right;font:11.67px/15px 'Liberation Mono', monospace;color:#d4d4d4">383</div>
<div style="position:absolute;left:0;top:174px;width:37px;text-align:right;font:11.67px/15px 'Liberation Mono', monospace;color:#d4d4d4">384</div>
<div style="position:absolute;left:49px;top:174px;font:11.67px/15px 'Liberation Mono', monospace;color:#e4e8ee;white-space:pre">            <span style="color:#e8903c">try</span> {</div>
<div style="position:absolute;left:0;top:189px;width:37px;text-align:right;font:11.67px/15px 'Liberation Mono', monospace;color:#d4d4d4">385</div>
<div style="position:absolute;left:49px;top:189px;font:11.67px/15px 'Liberation Mono', monospace;color:#e4e8ee;white-space:pre">                <span style="color:#6aa8ff">valorTotal</span> = <span style="color:#6aa8ff">formatter</span>.parse(<span style="color:#6aa8ff">txtValorUnitario</span>.getValue()).doubleValue() * <span style="color:#6aa8ff">txtQuantidade</span>.getValue();</div>
<div style="position:absolute;left:0;top:204px;width:37px;text-align:right;font:11.67px/15px 'Liberation Mono', monospace;color:#d4d4d4">386</div>
<div style="position:absolute;left:49px;top:204px;font:11.67px/15px 'Liberation Mono', monospace;color:#e4e8ee;white-space:pre">            } <span style="color:#e8903c">catch</span> (ParseException e) {</div>
<div style="position:absolute;left:0;top:219px;width:37px;text-align:right;font:11.67px/15px 'Liberation Mono', monospace;color:#d4d4d4">387</div>
<div style="position:absolute;left:49px;top:219px;font:11.67px/15px 'Liberation Mono', monospace;color:#e4e8ee;white-space:pre">                <span style="color:#a0a0a0">//</span> <span style="color:#d8ef3c;font-weight:bold">TODO</span><span style="color:#a0a0a0"> Auto-generated catch block</span></div>
<div style="position:absolute;left:0;top:234px;width:37px;text-align:right;font:11.67px/15px 'Liberation Mono', monospace;color:#d4d4d4">388</div>
<div style="position:absolute;left:49px;top:234px;font:11.67px/15px 'Liberation Mono', monospace;color:#e4e8ee;white-space:pre">                <span style="color:#6aa8ff">e</span>.printStackTrace();</div>
<div style="position:absolute;left:0;top:249px;width:37px;text-align:right;font:11.67px/15px 'Liberation Mono', monospace;color:#d4d4d4">389</div>
<div style="position:absolute;left:49px;top:249px;font:11.67px/15px 'Liberation Mono', monospace;color:#e4e8ee;white-space:pre">            }</div>
<div style="position:absolute;left:0;top:264px;width:37px;text-align:right;font:11.67px/15px 'Liberation Mono', monospace;color:#d4d4d4">390</div>
<div style="position:absolute;left:0;top:279px;width:37px;text-align:right;font:11.67px/15px 'Liberation Mono', monospace;color:#d4d4d4">391</div>
<div style="position:absolute;left:49px;top:279px;font:11.67px/15px 'Liberation Mono', monospace;color:#e4e8ee;white-space:pre">            <span style="color:#6aa8ff">txtValorTotalItem</span>.setValue(<span style="color:#6aa8ff">formatter</span>.format(<span style="color:#6aa8ff">valorTotal</span>));</div>
<div style="position:absolute;left:0;top:294px;width:37px;text-align:right;font:11.67px/15px 'Liberation Mono', monospace;color:#d4d4d4">392</div>
<div style="position:absolute;left:0;top:309px;width:37px;text-align:right;font:11.67px/15px 'Liberation Mono', monospace;color:#d4d4d4">393</div>
<div style="position:absolute;left:49px;top:309px;font:11.67px/15px 'Liberation Mono', monospace;color:#e4e8ee;white-space:pre">            somaValores += <span style="color:#6aa8ff">valorTotal</span>;</div>
<div style="position:absolute;left:0;top:324px;width:37px;text-align:right;font:11.67px/15px 'Liberation Mono', monospace;color:#d4d4d4">394</div>
<div style="position:absolute;left:49px;top:324px;font:11.67px/15px 'Liberation Mono', monospace;color:#e4e8ee;white-space:pre">            campoSomaValores.setValue(<span style="color:#6aa8ff">formatter</span>.format(somaValores));</div>
<div style="position:absolute;left:0;top:339px;width:37px;text-align:right;font:11.67px/15px 'Liberation Mono', monospace;color:#d4d4d4">395</div>
<div style="position:absolute;left:0;top:354px;width:37px;text-align:right;font:11.67px/15px 'Liberation Mono', monospace;color:#d4d4d4">396</div>
<div style="position:absolute;left:49px;top:354px;font:11.67px/15px 'Liberation Mono', monospace;color:#e4e8ee;white-space:pre">        });</div>
<div style="position:absolute;left:0;top:369px;width:37px;text-align:right;font:11.67px/15px 'Liberation Mono', monospace;color:#d4d4d4">397</div>
<div style="position:absolute;left:0;top:384px;width:37px;text-align:right;font:11.67px/15px 'Liberation Mono', monospace;color:#d4d4d4">398</div>
<div style="position:absolute;left:49px;top:384px;font:11.67px/15px 'Liberation Mono', monospace;color:#e4e8ee;white-space:pre">        HorizontalLayout linhaNova = <span style="color:#e8903c">new</span> HorizontalLayout();</div>
<div style="position:absolute;left:0;top:399px;width:37px;text-align:right;font:11.67px/15px 'Liberation Mono', monospace;color:#d4d4d4">399</div>
<div style="position:absolute;left:49px;top:399px;font:11.67px/15px 'Liberation Mono', monospace;color:#e4e8ee;white-space:pre">        <span style="color:#6aa8ff">linhaNova</span>.add(<span style="color:#6aa8ff">txtProdutos</span>, <span style="color:#6aa8ff">txtQuantidade</span>, <span style="color:#6aa8ff">txtValorUnitario</span>, <span style="color:#6aa8ff">txtValorTotalItem</span>);</div>
<div style="position:absolute;left:0;top:414px;width:37px;text-align:right;font:11.67px/15px 'Liberation Mono', monospace;color:#d4d4d4">400</div>
<div style="position:absolute;left:0;top:429px;width:37px;text-align:right;font:11.67px/15px 'Liberation Mono', monospace;color:#d4d4d4">401</div>
<div style="position:absolute;left:49px;top:429px;font:11.67px/15px 'Liberation Mono', monospace;color:#e4e8ee;white-space:pre">        venderDiv.add(<span style="color:#6aa8ff">linhaNova</span>);</div>
<div style="position:absolute;left:0;top:444px;width:37px;text-align:right;font:11.67px/15px 'Liberation Mono', monospace;color:#d4d4d4">402</div>
<div style="position:absolute;left:0;top:459px;width:37px;text-align:right;font:11.67px/15px 'Liberation Mono', monospace;color:#d4d4d4">403</div>
<div style="position:absolute;left:49px;top:459px;font:11.67px/15px 'Liberation Mono', monospace;color:#e4e8ee;white-space:pre">    }</div>
<div style="position:absolute;left:0;top:474px;width:37px;text-align:right;font:11.67px/15px 'Liberation Mono', monospace;color:#d4d4d4">404</div>
<div style="position:absolute;left:0;top:489px;width:37px;text-align:right;font:11.67px/15px 'Liberation Mono', monospace;color:#d4d4d4">405</div>
<div style="position:absolute;left:49px;top:489px;font:11.67px/15px 'Liberation Mono', monospace;color:#e4e8ee;white-space:pre">    <span style="color:#e8903c">private</span> <span style="color:#e8903c">void</span> <span style="color:#f0e4b0">novaVenda</span>() {</div>
<div style="position:absolute;left:0;top:504px;width:37px;text-align:right;font:11.67px/15px 'Liberation Mono', monospace;color:#d4d4d4">406</div>
<div style="position:absolute;left:49px;top:504px;font:11.67px/15px 'Liberation Mono', monospace;color:#e4e8ee;white-space:pre">        venda = <span style="color:#e8903c">new</span> Venda();</div>
<div style="position:absolute;left:0;top:519px;width:37px;text-align:right;font:11.67px/15px 'Liberation Mono', monospace;color:#d4d4d4">407</div>
<div style="position:absolute;left:49px;top:519px;font:11.67px/15px 'Liberation Mono', monospace;color:#e4e8ee;white-space:pre">        venda.setNome(<span style="color:#b4d77a">" "</span>);</div>
<div style="position:absolute;left:0;top:534px;width:37px;text-align:right;font:11.67px/15px 'Liberation Mono', monospace;color:#d4d4d4">408</div>
<div style="position:absolute;left:49px;top:534px;font:11.67px/15px 'Liberation Mono', monospace;color:#e4e8ee;white-space:pre">        dlgJanela.open();</div>
<div style="position:absolute;left:0;top:549px;width:37px;text-align:right;font:11.67px/15px 'Liberation Mono', monospace;color:#d4d4d4">409</div>
<div style="position:absolute;left:0;top:564px;width:37px;text-align:right;font:11.67px/15px 'Liberation Mono', monospace;color:#d4d4d4">410</div>
<div style="position:absolute;left:49px;top:564px;font:11.67px/15px 'Liberation Mono', monospace;color:#e4e8ee;white-space:pre">    }</div>
<div style="position:absolute;left:0;top:579px;width:37px;text-align:right;font:11.67px/15px 'Liberation Mono', monospace;color:#d4d4d4">411</div>
<div style="position:absolute;left:49px;top:579px;font:11.67px/15px 'Liberation Mono', monospace;color:#e4e8ee;white-space:pre">}</div>
</div>
<div style="position:absolute;left:318px;top:675px;width:2px;height:15px;background:#fff;"></div>
<svg style="position:absolute;left:409px;top:628px;" width="50" height="3" viewBox="0 0 50 3"><path d="M0 2L1 0L3 2L5 0L7 2L9 0L11 2L13 0L15 2L17 0L19 2L21 0L23 2L25 0L27 2L29 0L31 2L33 0L35 2L37 0L39 2L41 0L43 2L45 0L47 2L49 0" fill="none" stroke="#e8207a" stroke-width="0.9"/></svg>
<svg style="position:absolute;left:265px;top:316px;" width="13" height="13" viewBox="0 0 13 13"><circle cx="6.5" cy="6.5" r="6" fill="#5a78f0"/><path d="M3.5 6.5L5.8 8.8L9.5 4.5" fill="none" stroke="#fff" stroke-width="1.5"/></svg>
<svg style="position:absolute;left:299px;top:588px;" width="10" height="10" viewBox="0 0 10 10"><circle cx="5" cy="5" r="4.5" fill="#8a8a8a"/><path d="M2.5 5H7.5" stroke="#000" stroke-width="1.2"/></svg>
<svg style="position:absolute;left:266px;top:616px;" width="11" height="15" viewBox="0 0 11 15"><circle cx="5.5" cy="5" r="5" fill="#fff"/><rect x="3" y="7" width="5" height="7" rx="2.2" fill="#fff"/><circle cx="5.5" cy="5" r="3.9" fill="#d80010"/><path d="M3.2 7.5H7.8L6.8 9.2H4.2Z" fill="#d80010"/><path d="M6.2 2.4Q7.8 3 7.9 4.6" stroke="#fff" stroke-width="0.8" fill="none"/></svg>
<div style="position:absolute;left:1902px;top:97px;width:1px;height:591px;background:#5f6a74;"></div>
<div style="position:absolute;left:1906px;top:101px;width:6px;height:6px;background:#ff0080;border:1px solid #888"></div>
<div style="position:absolute;left:1904px;top:113px;width:12px;height:1px;background:#bbb;"></div>
<svg style="position:absolute;left:1905px;top:625px;" width="10" height="7" viewBox="0 0 10 7"><rect x="0.75" y="0.75" width="8.5" height="5" fill="#001a33" stroke="#2a80e0" stroke-width="1.2"/></svg>
<svg style="position:absolute;left:1905px;top:652px;" width="10" height="7" viewBox="0 0 10 7"><rect x="0.75" y="0.75" width="8.5" height="5" fill="#2a0016" stroke="#e0207a" stroke-width="1.2"/></svg>
<div style="position:absolute;left:3px;top:700px;width:93px;height:1px;background:#6e6e6e;"></div>
<div style="position:absolute;left:96px;top:700px;width:1821px;height:1px;background:#3a3a3a;"></div>
<div style="position:absolute;left:95px;top:701px;width:1px;height:21px;background:#1c1c1c;"></div>
<div style="position:absolute;left:3px;top:701px;width:1px;height:21px;background:#141414;"></div>
<svg style="position:absolute;left:8px;top:706px;" width="15" height="13" viewBox="0 0 15 13"><rect x="0" y="0" width="14" height="9.5" rx="1.5" fill="#6a80f8"/><rect x="1.8" y="1.6" width="10.4" height="6.3" fill="#fff"/><path d="M4.5 12H9.5V10.5H4.5Z" fill="#6a80f8"/></svg>
<div style="position:absolute;left:27px;top:705.8px;font:12px/12px 'Liberation Sans', sans-serif;color:#fff;white-space:pre;letter-spacing:-0.147px;">Console</div>
<svg style="position:absolute;left:78px;top:707px;" width="10" height="10" viewBox="0 0 10 10"><path d="M1.5 1.5L8.5 8.5M8.5 1.5L1.5 8.5" stroke="#e8e8e8" stroke-width="2.6" stroke-linecap="square"/><path d="M1.5 1.5L8.5 8.5M8.5 1.5L1.5 8.5" stroke="#000" stroke-width="0.9" stroke-linecap="square"/></svg>
<div style="position:absolute;left:3px;top:724.8px;font:12px/12px 'Liberation Sans', sans-serif;color:#7cc6b0;white-space:pre;letter-spacing:-0.101px;">fjsistemas - Application [Spring Boot App] C:\Program Files\Java\jdk-13.0.1\bin\javaw.exe  (24 de mar de 2021 16:21:16)</div>
<div style="position:absolute;left:3px;top:738px;width:1913px;height:2px;background:#f0f0f0;"></div>
<div style="position:absolute;left:1915px;top:740px;width:1px;height:259px;background:#56606a;"></div>
<div style="position:absolute;left:0;top:740px;width:1907px;height:265px;overflow:hidden">
<div style="position:absolute;left:5px;top:2px;font:11.67px/15px 'Liberation Mono', monospace;color:#e6e6e6;white-space:pre">2021-03-24 16:33:54.869  INFO 2500 --- [  restartedMain] org.atmosphere.cpr.AtmosphereFramework   : Installed AtmosphereInterceptor  Track Message Size Interceptor using | with priority BEFORE_DEFAULT</div>
<div style="position:absolute;left:5px;top:17px;font:11.67px/15px 'Liberation Mono', monospace;color:#e6e6e6;white-space:pre">2021-03-24 16:33:54.874  INFO 2500 --- [  restartedMain] o.s.b.w.embedded.tomcat.TomcatWebServer  : Tomcat started on port(s): 8080 (http) with context path ''</div>
<div style="position:absolute;left:5px;top:32px;font:11.67px/15px 'Liberation Mono', monospace;color:#e6e6e6;white-space:pre">2021-03-24 16:33:54.879  INFO 2500 --- [  restartedMain] br.com.fjsistemas.Application            : Started Application in 6.39 seconds (JVM running for 753.756)</div>
<div style="position:absolute;left:5px;top:47px;font:11.67px/15px 'Liberation Mono', monospace;color:#e6e6e6;white-space:pre">2021-03-24 16:33:54.881  INFO 2500 --- [  restartedMain] .ConditionEvaluationDeltaLoggingListener : Condition evaluation unchanged</div>
<div style="position:absolute;left:5px;top:62px;font:11.67px/15px 'Liberation Mono', monospace;color:#e6e6e6;white-space:pre">2021-03-24 16:33:54.906  INFO 2500 --- [nio-8080-exec-1] o.a.c.c.C.[Tomcat-1].[localhost].[/]     : Initializing Spring DispatcherServlet 'dispatcherServlet'</div>
<div style="position:absolute;left:5px;top:77px;font:11.67px/15px 'Liberation Mono', monospace;color:#e6e6e6;white-space:pre">2021-03-24 16:33:54.906  INFO 2500 --- [nio-8080-exec-1] o.s.web.servlet.DispatcherServlet        : Initializing Servlet 'dispatcherServlet'</div>
<div style="position:absolute;left:5px;top:92px;font:11.67px/15px 'Liberation Mono', monospace;color:#e6e6e6;white-space:pre">2021-03-24 16:33:54.908  INFO 2500 --- [nio-8080-exec-1] o.s.web.servlet.DispatcherServlet        : Completed initialization in 2 ms</div>
<div style="position:absolute;left:5px;top:107px;font:11.67px/15px 'Liberation Mono', monospace;color:#e6e6e6;white-space:pre">2021-03-24 16:33:54.913  WARN 2500 --- [nio-8080-exec-2] c.v.f.s.DeploymentConfigurationFactory   : Found 'webpack.config.js' in the project/working directory. Will use it for webpack dev server.</div>
<div style="position:absolute;left:5px;top:122px;font:11.67px/15px 'Liberation Mono', monospace;color:#e6e6e6;white-space:pre">2021-03-24 16:33:54.913  WARN 2500 --- [nio-8080-exec-2] com.vaadin.flow.server.VaadinService     : </div>
<div style="position:absolute;left:5px;top:137px;font:11.67px/15px 'Liberation Mono', monospace;color:#e6e6e6;white-space:pre">=================================================================</div>
<div style="position:absolute;left:5px;top:152px;font:11.67px/15px 'Liberation Mono', monospace;color:#e6e6e6;white-space:pre">Vaadin depends on Atmosphere 2.4.30.slf4jvaadin1 but version 2.4.30.vaadin2 was found.</div>
<div style="position:absolute;left:5px;top:167px;font:11.67px/15px 'Liberation Mono', monospace;color:#e6e6e6;white-space:pre">This might cause compatibility problems if push is used.</div>
<div style="position:absolute;left:5px;top:182px;font:11.67px/15px 'Liberation Mono', monospace;color:#e6e6e6;white-space:pre">=================================================================</div>
<div style="position:absolute;left:5px;top:197px;font:11.67px/15px 'Liberation Mono', monospace;color:#e6e6e6;white-space:pre">2021-03-24 16:33:54.921  INFO 2500 --- [nio-8080-exec-2] c.vaadin.flow.spring.SpringInstantiator  : The number of beans implementing 'I18NProvider' is 0. Cannot use Spring beans for I18N, falling back to the default behavior</div>
<div style="position:absolute;left:5px;top:212px;font:11.67px/15px 'Liberation Mono', monospace;color:#e6e6e6;white-space:pre">Hibernate: select cliente0_.id as id1_0_, cliente0_.bairro as bairro2_0_, cliente0_.celular as celular3_0_, cliente0_.cidade as cidade4_0_, cliente0_.complemento as compleme5_0_, cliente0_.cpf as cpf6_0_, cliente0_.endereco as endereco7_0_, cliente0_.estado as estado8_0_,</div>
<div style="position:absolute;left:5px;top:227px;font:11.67px/15px 'Liberation Mono', monospace;color:#e6e6e6;white-space:pre">Hibernate: select venda0_.id as id1_4_, venda0_.celular as celular2_4_, venda0_.data as data3_4_, venda0_.nome_id as nome_id6_4_, venda0_.telefone as telefone4_4_, venda0_.valor as valor5_4_ from venda venda0_</div>
</div>
<div style="position:absolute;left:409px;top:635px;width:528px;height:95px;background:#000;border:1px solid #6e6e6e"></div>
<svg style="position:absolute;left:414px;top:639px;" width="11" height="15" viewBox="0 0 11 15"><circle cx="5.5" cy="5" r="5" fill="#fff"/><rect x="3" y="7" width="5" height="7" rx="2.2" fill="#fff"/><circle cx="5.5" cy="5" r="3.9" fill="#d80010"/><path d="M3.2 7.5H7.8L6.8 9.2H4.2Z" fill="#d80010"/><path d="M6.2 2.4Q7.8 3 7.9 4.6" stroke="#fff" stroke-width="0.8" fill="none"/></svg>
<div style="position:absolute;left:430px;top:639.8px;font:12px/12px 'Liberation Sans', sans-serif;color:#f0f0f0;white-space:pre;letter-spacing:-0.058px;">The method setNome(Cliente) in the type Venda is not applicable for the arguments (String)</div>
<div style="position:absolute;left:410px;top:656px;width:528px;height:2px;background:#f0f0f0;"></div>
<div style="position:absolute;left:414px;top:661.8px;font:12px/12px 'Liberation Sans', sans-serif;color:#f0f0f0;white-space:pre;letter-spacing:-0.169px;">2 quick fixes available:</div>
<svg style="position:absolute;left:421px;top:684px;" width="14" height="12" viewBox="0 0 14 12"><path d="M1 11C1 6 4 3.5 8.5 3.5V0.5L13.5 5L8.5 9.5V6.5C5 6.5 2.5 8 1 11Z" fill="#2ec43c"/></svg>
<div style="position:absolute;left:441px;top:682.8px;font:12px/12px 'Liberation Sans', sans-serif;color:#62bdf0;white-space:pre;text-decoration:underline;text-underline-offset:1px;letter-spacing:0.042px;">Change method 'setNome(Cliente)' to 'setNome(String)'</div>
<svg style="position:absolute;left:423px;top:703px;" width="11" height="11" viewBox="0 0 11 11"><circle cx="5.5" cy="5.5" r="5.2" fill="#2ec43c"/></svg>
<div style="position:absolute;left:441px;top:700.8px;font:12px/12px 'Liberation Sans', sans-serif;color:#62bdf0;white-space:pre;text-decoration:underline;text-underline-offset:1px;letter-spacing:-0.017px;">Create method 'setNome(String)' in type 'Venda'</div>
<div style="position:absolute;left:410px;top:716px;width:528px;height:2px;background:#f0f0f0;"></div>
<div style="position:absolute;left:700px;top:718px;width:237px;height:13px;overflow:hidden"><div style="position:absolute;right:0;top:1px;font:12px/12px 'Liberation Sans', sans-serif;color:#5c5c5c;white-space:pre">Press 'F2' for focus</div></div>
<div style="position:absolute;left:3px;top:1005px;width:1906px;height:1px;background:#5f6a74;"></div>
<div style="position:absolute;left:1178px;top:1010px;width:2px;height:25px;background:#e8e8e8;"></div>
<div style="position:absolute;left:1313px;top:1010px;width:2px;height:25px;background:#e8e8e8;"></div>
<div style="position:absolute;left:1440px;top:1010px;width:2px;height:25px;background:#e8e8e8;"></div>
<div style="position:absolute;left:1186px;top:1015.8px;font:12px/12px 'Liberation Sans', sans-serif;color:#f0f0f0;white-space:pre;letter-spacing:0.026px;">Writable</div>
<div style="position:absolute;left:1320px;top:1015.8px;font:12px/12px 'Liberation Sans', sans-serif;color:#f0f0f0;white-space:pre;letter-spacing:-0.196px;">Smart Insert</div>
<div style="position:absolute;left:1448px;top:1015.8px;font:12px/12px 'Liberation Sans', sans-serif;color:#f0f0f0;white-space:pre;letter-spacing:-0.545px;">411 : 2 : 13461</div>
<svg style="position:absolute;left:1565px;top:1016px;" width="4" height="16" viewBox="0 0 4 16"><rect x="0.5" y="0" width="2.5" height="2.5" fill="#fff"/><rect x="0.5" y="6" width="2.5" height="2.5" fill="#fff"/><rect x="0.5" y="12" width="2.5" height="2.5" fill="#fff"/></svg>
<svg style="position:absolute;left:1852px;top:1015px;" width="3" height="22" viewBox="0 0 3 22"><rect x="0" y="0" width="2" height="2" fill="#ddd"/><rect x="0" y="6" width="2" height="2" fill="#ddd"/><rect x="0" y="12" width="2" height="2" fill="#ddd"/><rect x="0" y="18" width="2" height="2" fill="#ddd"/></svg>
<div style="position:absolute;left:1856px;top:1010px;width:24px;height:26px;border:2px solid #e8e8e8"></div>
<svg style="position:absolute;left:1862px;top:1017px;" width="16" height="16" viewBox="0 0 16 16"><path d="M8 1.5Q9 1.5 9 2.5Q12.5 3.5 12.5 8V11L14 12.5H2L3.5 11V8Q3.5 3.5 7 2.5Q7 1.5 8 1.5Z" fill="#e8336e"/><ellipse cx="8" cy="12.8" rx="6.5" ry="1.3" fill="none" stroke="#e8336e" stroke-width="1"/></svg>
<svg style="position:absolute;left:1893px;top:1017px;" width="3" height="16" viewBox="0 0 3 16"><rect x="0" y="0" width="2" height="2" fill="#ddd"/><rect x="0" y="5" width="2" height="2" fill="#ddd"/><rect x="0" y="10" width="2" height="2" fill="#ddd"/><rect x="0" y="14" width="2" height="2" fill="#ddd"/></svg>
<svg style="position:absolute;left:1902px;top:1016px;" width="13" height="18" viewBox="0 0 13 18"><path d="M6.5 0.5C2.5 0.5 0.5 3.5 0.5 6C0.5 8.5 3 10 4 12V16.5H9V12C10 10 12.5 8.5 12.5 6C12.5 3.5 10.5 0.5 6.5 0.5Z" fill="#f5c000"/><path d="M6.5 2.5C4 2.5 2.6 4.3 2.6 6C2.6 7.7 4.5 9 5 11H8C8.5 9 10.4 7.7 10.4 6C10.4 4.3 9 2.5 6.5 2.5Z" fill="#fffbe0"/></svg>
<div style="position:absolute;left:0px;top:1040px;width:1920px;height:40px;background:#101010;"></div>
<div style="position:absolute;left:198px;top:1040px;width:48px;height:40px;background:#444444;"></div>
<div style="position:absolute;left:55px;top:1078px;width:40px;height:2px;background:#a6f0ff;"></div>
<div style="position:absolute;left:153px;top:1078px;width:40px;height:2px;background:#a6f0ff;"></div>
<div style="position:absolute;left:198px;top:1078px;width:48px;height:2px;background:#a6f0ff;"></div>
<svg style="position:absolute;left:15px;top:1051px;" width="18" height="18" viewBox="0 0 18 18"><path d="M0 2.5L7.5 1.4V8.4H0Z M8.5 1.3L17.5 0V8.4H8.5Z M0 9.4H7.5V16.5L0 15.4Z M8.5 9.4H17.5V17.8L8.5 16.6Z" fill="#fff"/></svg>
<svg style="position:absolute;left:62px;top:1047px;" width="26" height="26" viewBox="0 0 26 26"><defs><linearGradient id="eg" x1="0.1" y1="0.2" x2="0.9" y2="0.7"><stop offset="0" stop-color="#1d9be6"/><stop offset="0.55" stop-color="#33c0c8"/><stop offset="1" stop-color="#66e64a"/></linearGradient></defs><circle cx="12.8" cy="12.6" r="12" fill="url(#eg)"/><path d="M0.8 13Q0.8 24.6 12.8 24.6Q19.8 24.6 23.2 19Q15.5 22.5 12 18.5Q9.8 15.5 11.2 12.2Q8 8.6 3.2 9.6Q1 11 0.8 13Z" fill="#1a6ccc"/><path d="M0.8 14Q1.5 24.6 12.8 24.6Q19.8 24.6 23.2 19Q16 23.2 11.5 20Q6 16 0.8 14Z" fill="#1558b0"/><ellipse cx="14.2" cy="13" rx="3.2" ry="2.8" fill="#101010"/><path d="M10.8 14.5Q13.5 21.5 20.5 21Q22.8 20.5 23.6 18.6Q17 20.2 13.8 15.8Z" fill="#101010"/><circle cx="6.5" cy="18.8" r="5.6" fill="#d4d0cc"/><circle cx="6.5" cy="16.8" r="2" fill="#8a8a8a"/><path d="M3 23Q6.5 18.5 10 23Z" fill="#8a8a8a"/></svg>
<svg style="position:absolute;left:111px;top:1048px;" width="26" height="24" viewBox="0 0 26 24"><rect x="8" y="1" width="16" height="10" fill="#0a5cb8"/><rect x="12" y="6" width="6" height="5" fill="#0f78d4"/><rect x="18" y="1" width="6" height="5" fill="#28a8ea"/><rect x="18" y="6" width="6" height="5" fill="#50d9ff"/><rect x="8" y="11" width="17" height="11.5" fill="#1490df"/><path d="M8 11L16.5 17L25 11V22.5H8Z" fill="#28a8ea"/><path d="M8 22.5L16.5 17L25 22.5Z" fill="#1a9ae6"/><rect x="0.8" y="6" width="12.2" height="12.2" fill="#0f62c6"/><ellipse cx="6.9" cy="12.1" rx="3.1" ry="3.5" fill="none" stroke="#fff" stroke-width="1.8"/></svg>
<svg style="position:absolute;left:161px;top:1048px;" width="24" height="24" viewBox="0 0 24 24"><path d="M7 1.5Q10 0.5 12 1.5Q19 1 22 7Q23.5 10 22.5 13Q24 16 22 20Q19 23.5 14 22.5Q8 23.5 3.5 19Q0 15 1.5 10Q0 5 3 3Z" fill="#0aa0e8"/><text x="12" y="17.5" text-anchor="middle" font-family="Liberation Sans" font-weight="bold" font-size="15" fill="#fff">S</text></svg>
<svg style="position:absolute;left:209px;top:1047px;" width="26" height="26" viewBox="0 0 26 26"><circle cx="12" cy="13" r="11.2" fill="#f7941e"/><circle cx="14" cy="13" r="11" fill="#2c2255"/><circle cx="14.2" cy="16" r="7" fill="#3e3080"/><rect x="3.5" y="8.5" width="21" height="2.6" fill="#d8d8e0"/><rect x="3.2" y="12" width="21.6" height="1.6" fill="#fff"/><rect x="3.5" y="14.5" width="21" height="2.6" fill="#d8d8e0"/></svg>
<svg style="position:absolute;left:1779px;top:1055px;" width="13" height="8" viewBox="0 0 13 8"><path d="M0.7 7.3L6.5 1.5L12.3 7.3" fill="none" stroke="#fff" stroke-width="1.1"/></svg>
<div style="position:absolute;left:1819px;top:1044.8px;font:12px/12px 'Liberation Sans', sans-serif;color:#fff;white-space:pre;letter-spacing:-0.806px;">16:34</div>
<div style="position:absolute;left:1803px;top:1062.8px;font:12px/12px 'Liberation Sans', sans-serif;color:#fff;white-space:pre;letter-spacing:-0.306px;">24/03/2021</div>
<svg style="position:absolute;left:1879px;top:1052px;" width="17" height="16" viewBox="0 0 17 16"><path d="M0.6 0.6H15.4V12.4H9.5L8 14.5L6.5 12.4H0.6Z" fill="none" stroke="#fff" stroke-width="1.1"/></svg>
<div style="position:absolute;left:1915px;top:1040px;width:1px;height:40px;background:#3a3a3a;"></div>
<svg style="position:absolute;left:1px;top:49px;" width="3" height="17" viewBox="0 0 3 17"><rect x="0" y="0" width="2" height="2" fill="#d8d0c0"/><rect x="0" y="5" width="2" height="2" fill="#d8d0c0"/><rect x="0" y="10" width="2" height="2" fill="#d8d0c0"/><rect x="0" y="15" width="2" height="2" fill="#d8d0c0"/></svg>
<svg style="position:absolute;left:9px;top:49px;" width="17" height="17" viewBox="0 0 17 17"><rect x="0.5" y="4.5" width="12" height="11" fill="#fff" stroke="#6a80f8" stroke-width="2"/><rect x="0.5" y="4.5" width="12" height="3" fill="#6a80f8"/><path d="M13 0.5V7.5M9.5 4H16.5" stroke="#f5c000" stroke-width="2.2"/></svg>
<svg style="position:absolute;left:29px;top:55px;" width="10" height="6" viewBox="0 0 10 6"><path d="M0.5 0.5H9.5L5 5.5Z" fill="#bcbcbc"/></svg>
<svg style="position:absolute;left:46px;top:49px;" width="17" height="17" viewBox="0 0 17 17"><path d="M1 2Q1 1 2 1H12L15 4V14Q15 15 14 15H2Q1 15 1 14Z" fill="#6e6e72"/><rect x="3.5" y="2.5" width="8" height="3" fill="#000"/><circle cx="8" cy="10.5" r="2" fill="#000"/></svg>
<svg style="position:absolute;left:69px;top:49px;" width="17" height="17" viewBox="0 0 17 17"><path d="M0.5 4V15.5H12" fill="none" stroke="#5a5a5e" stroke-width="1.4"/><g transform="translate(2.5,0) scale(0.88)"><path d="M1 2Q1 1 2 1H12L15 4V14Q15 15 14 15H2Q1 15 1 14Z" fill="#5a5a5e"/><rect x="3.5" y="2.5" width="8" height="3" fill="#000"/><circle cx="8" cy="10.5" r="2" fill="#000"/></g></svg>
<svg style="position:absolute;left:91px;top:49px;" width="3" height="17" viewBox="0 0 3 17"><rect x="0" y="0" width="2" height="2" fill="#d8d0c0"/><rect x="0" y="5" width="2" height="2" fill="#d8d0c0"/><rect x="0" y="10" width="2" height="2" fill="#d8d0c0"/><rect x="0" y="15" width="2" height="2" fill="#d8d0c0"/></svg>
<svg style="position:absolute;left:97px;top:49px;" width="17" height="17" viewBox="0 0 17 17"><rect x="0.5" y="1.5" width="15" height="10" rx="1.5" fill="#6a80f8"/><rect x="2.3" y="3.1" width="11.4" height="6.8" fill="#fff"/><path d="M5 15H11V13H5Z" fill="#6a80f8"/></svg>
<svg style="position:absolute;left:119px;top:49px;" width="3" height="17" viewBox="0 0 3 17"><rect x="0" y="0" width="2" height="2" fill="#d8d0c0"/><rect x="0" y="5" width="2" height="2" fill="#d8d0c0"/><rect x="0" y="10" width="2" height="2" fill="#d8d0c0"/><rect x="0" y="15" width="2" height="2" fill="#d8d0c0"/></svg>
<svg style="position:absolute;left:126px;top:49px;" width="17" height="17" viewBox="0 0 17 17"><circle cx="8" cy="8" r="5.5" fill="#5a78f0"/><circle cx="8" cy="8" r="3" fill="#fff"/><path d="M1.5 1.5L14.5 14.5" stroke="#d08a40" stroke-width="2.2"/></svg>
<svg style="position:absolute;left:147px;top:49px;" width="3" height="17" viewBox="0 0 3 17"><rect x="0" y="0" width="2" height="2" fill="#d8d0c0"/><rect x="0" y="5" width="2" height="2" fill="#d8d0c0"/><rect x="0" y="10" width="2" height="2" fill="#d8d0c0"/><rect x="0" y="15" width="2" height="2" fill="#d8d0c0"/></svg>
<svg style="position:absolute;left:153px;top:49px;" width="17" height="17" viewBox="0 0 17 17"><path d="M3 7A5 5 0 0 1 12.5 5" fill="none" stroke="#f5c000" stroke-width="2.4"/><path d="M10 1.5L14.5 5L10 7.5Z" fill="#f5c000"/><path d="M13 9A5 5 0 0 1 3.5 11" fill="none" stroke="#f5c000" stroke-width="2.4"/><path d="M6 14.5L1.5 11L6 8.5Z" fill="#f5c000"/></svg>
<svg style="position:absolute;left:175px;top:49px;" width="3" height="17" viewBox="0 0 3 17"><rect x="0" y="0" width="2" height="2" fill="#d8d0c0"/><rect x="0" y="5" width="2" height="2" fill="#d8d0c0"/><rect x="0" y="10" width="2" height="2" fill="#d8d0c0"/><rect x="0" y="15" width="2" height="2" fill="#d8d0c0"/></svg>
<svg style="position:absolute;left:182px;top:49px;" width="17" height="17" viewBox="0 0 17 17"><rect x="1" y="1.5" width="11" height="4" rx="1.5" fill="#20b8f0"/><path d="M12 3.5H14V8H7.5V10" fill="none" stroke="#20b8f0" stroke-width="1.5"/><rect x="6" y="10" width="3" height="6" fill="#20b8f0"/></svg>
<svg style="position:absolute;left:205px;top:49px;" width="17" height="17" viewBox="0 0 17 17"><rect x="1" y="13" width="2.6" height="2.6" fill="#20b8f0"/><rect x="5" y="13" width="2.6" height="2.6" fill="#20b8f0"/><rect x="9" y="13" width="2.6" height="2.6" fill="#20b8f0"/><rect x="13" y="13" width="2.6" height="2.6" fill="#20b8f0"/><rect x="1" y="9" width="2.6" height="2.6" fill="#20b8f0"/><rect x="5" y="9" width="2.6" height="2.6" fill="#20b8f0"/><rect x="9" y="9" width="2.6" height="2.6" fill="#20b8f0"/><rect x="13" y="9" width="2.6" height="2.6" fill="#20b8f0"/><rect x="5" y="5" width="2.6" height="2.6" fill="#20b8f0"/><rect x="9" y="5" width="2.6" height="2.6" fill="#20b8f0"/><rect x="9" y="1" width="2.6" height="2.6" fill="#20b8f0"/></svg>
<svg style="position:absolute;left:226px;top:49px;" width="3" height="17" viewBox="0 0 3 17"><rect x="0" y="0" width="2" height="2" fill="#d8d0c0"/><rect x="0" y="5" width="2" height="2" fill="#d8d0c0"/><rect x="0" y="10" width="2" height="2" fill="#d8d0c0"/><rect x="0" y="15" width="2" height="2" fill="#d8d0c0"/></svg>
<svg style="position:absolute;left:232px;top:49px;" width="17" height="17" viewBox="0 0 17 17"><circle cx="2" cy="6" r="1.6" fill="#fff"/><circle cx="6.5" cy="6" r="1.6" fill="#fff"/><circle cx="11" cy="6" r="1.6" fill="#fff"/><rect x="6" y="9" width="10" height="6" rx="3" fill="#20c8e0"/><circle cx="13" cy="12" r="2" fill="#000"/></svg>
<svg style="position:absolute;left:254px;top:49px;" width="3" height="17" viewBox="0 0 3 17"><rect x="0" y="0" width="2" height="2" fill="#d8d0c0"/><rect x="0" y="5" width="2" height="2" fill="#d8d0c0"/><rect x="0" y="10" width="2" height="2" fill="#d8d0c0"/><rect x="0" y="15" width="2" height="2" fill="#d8d0c0"/></svg>
<svg style="position:absolute;left:260px;top:49px;" width="17" height="17" viewBox="0 0 17 17"><path d="M8 0.5L15 4.5V11.5L8 15.5L1 11.5V4.5Z" fill="#30c040"/><path d="M5.5 5.5A3.6 3.6 0 1 0 10.5 5.5" fill="none" stroke="#fff" stroke-width="1.5"/><path d="M8 3.5V8" stroke="#fff" stroke-width="1.5"/></svg>
<svg style="position:absolute;left:282px;top:49px;" width="3" height="17" viewBox="0 0 3 17"><rect x="0" y="0" width="2" height="2" fill="#d8d0c0"/><rect x="0" y="5" width="2" height="2" fill="#d8d0c0"/><rect x="0" y="10" width="2" height="2" fill="#d8d0c0"/><rect x="0" y="15" width="2" height="2" fill="#d8d0c0"/></svg>
<svg style="position:absolute;left:288px;top:49px;" width="17" height="17" viewBox="0 0 17 17"><path d="M8 1.5L9.5 3.5H12L13.5 1.5L14.2 7L11.2 10.5L8 7Z" fill="#f2d9a2"/><circle cx="10.2" cy="5.5" r="0.7" fill="#000"/><circle cx="12.2" cy="5.5" r="0.7" fill="#000"/><path d="M2.5 11L7.5 8.5L9.5 9.5L12 12.5L14.5 15.5L13.5 16.5L10.5 13.5L3 12Z" fill="#f2a900"/><circle cx="5" cy="10.5" r="0.5" fill="#000"/><circle cx="7" cy="10" r="0.5" fill="#000"/><path d="M2 4.5Q3 5.5 4.5 5M5 3Q6.5 3 7 4" stroke="#c8e8c8" stroke-width="0.9" fill="none"/><circle cx="1" cy="13" r="0.8" fill="#ccc"/><circle cx="2" cy="15.5" r="0.8" fill="#c8e8c8"/><circle cx="2.5" cy="9" r="0.7" fill="#c8e8c8"/><circle cx="6.5" cy="15.5" r="0.8" fill="#f0a000"/><circle cx="5" cy="13.5" r="0.6" fill="#f0a000"/></svg>
<svg style="position:absolute;left:311px;top:49px;" width="17" height="17" viewBox="0 0 17 17"><path d="M8 1.5L9.5 3.5H12L13.5 1.5L14.2 7L11.2 10.5L8 7Z" fill="#f2d9a2"/><circle cx="10.2" cy="5.5" r="0.7" fill="#000"/><circle cx="12.2" cy="5.5" r="0.7" fill="#000"/><path d="M2.5 11L7.5 8.5L9.5 9.5L12 12.5L14.5 15.5L13.5 16.5L10.5 13.5L3 12Z" fill="#f2a900"/><circle cx="5" cy="10.5" r="0.5" fill="#000"/><circle cx="7" cy="10" r="0.5" fill="#000"/><path d="M2 4.5Q3 5.5 4.5 5M5 3Q6.5 3 7 4" stroke="#c8e8c8" stroke-width="0.9" fill="none"/><circle cx="1" cy="13" r="0.8" fill="#ccc"/><circle cx="2" cy="15.5" r="0.8" fill="#c8e8c8"/><circle cx="2.5" cy="9" r="0.7" fill="#c8e8c8"/><circle cx="6.5" cy="15.5" r="0.8" fill="#f0a000"/><circle cx="5" cy="13.5" r="0.6" fill="#f0a000"/><circle cx="10.8" cy="10.8" r="5.8" fill="#f00000"/><path d="M8.3 8.3L13.3 13.3M13.3 8.3L8.3 13.3" stroke="#fff" stroke-width="1.8"/></svg>
<svg style="position:absolute;left:334px;top:49px;" width="17" height="17" viewBox="0 0 17 17"><path d="M8 1.5L9.5 3.5H12L13.5 1.5L14.2 7L11.2 10.5L8 7Z" fill="#f2d9a2"/><circle cx="10.2" cy="5.5" r="0.7" fill="#000"/><circle cx="12.2" cy="5.5" r="0.7" fill="#000"/><path d="M2.5 11L7.5 8.5L9.5 9.5L12 12.5L14.5 15.5L13.5 16.5L10.5 13.5L3 12Z" fill="#f2a900"/><circle cx="5" cy="10.5" r="0.5" fill="#000"/><circle cx="7" cy="10" r="0.5" fill="#000"/><path d="M2 4.5Q3 5.5 4.5 5M5 3Q6.5 3 7 4" stroke="#c8e8c8" stroke-width="0.9" fill="none"/><circle cx="1" cy="13" r="0.8" fill="#ccc"/><circle cx="2" cy="15.5" r="0.8" fill="#c8e8c8"/><circle cx="2.5" cy="9" r="0.7" fill="#c8e8c8"/><circle cx="6.5" cy="15.5" r="0.8" fill="#f0a000"/><circle cx="5" cy="13.5" r="0.6" fill="#f0a000"/><path d="M3 11.5Q6 6 10.5 6Q15.5 6.5 15 11Q14.5 14.5 11.5 14.5" fill="none" stroke="#38b8ff" stroke-width="1.8"/><path d="M1 8.5L2.5 14.5L7.5 12.5Z" fill="#40c8ff"/></svg>
<svg style="position:absolute;left:362px;top:49px;" width="17" height="17" viewBox="0 0 17 17"><path d="M8 1.5L9.5 3.5H12L13.5 1.5L14.2 7L11.2 10.5L8 7Z" fill="#f2d9a2"/><circle cx="10.2" cy="5.5" r="0.7" fill="#000"/><circle cx="12.2" cy="5.5" r="0.7" fill="#000"/><path d="M2.5 11L7.5 8.5L9.5 9.5L12 12.5L14.5 15.5L13.5 16.5L10.5 13.5L3 12Z" fill="#f2a900"/><circle cx="5" cy="10.5" r="0.5" fill="#000"/><circle cx="7" cy="10" r="0.5" fill="#000"/><path d="M2 4.5Q3 5.5 4.5 5M5 3Q6.5 3 7 4" stroke="#c8e8c8" stroke-width="0.9" fill="none"/><circle cx="1" cy="13" r="0.8" fill="#ccc"/><circle cx="2" cy="15.5" r="0.8" fill="#c8e8c8"/><circle cx="2.5" cy="9" r="0.7" fill="#c8e8c8"/><circle cx="6.5" cy="15.5" r="0.8" fill="#f0a000"/><circle cx="5" cy="13.5" r="0.6" fill="#f0a000"/></svg>
<svg style="position:absolute;left:385px;top:49px;" width="17" height="17" viewBox="0 0 17 17"><path d="M8 1.5L9.5 3.5H12L13.5 1.5L14.2 7L11.2 10.5L8 7Z" fill="#f2d9a2"/><circle cx="10.2" cy="5.5" r="0.7" fill="#000"/><circle cx="12.2" cy="5.5" r="0.7" fill="#000"/><path d="M2.5 11L7.5 8.5L9.5 9.5L12 12.5L14.5 15.5L13.5 16.5L10.5 13.5L3 12Z" fill="#f2a900"/><circle cx="5" cy="10.5" r="0.5" fill="#000"/><circle cx="7" cy="10" r="0.5" fill="#000"/><path d="M2 4.5Q3 5.5 4.5 5M5 3Q6.5 3 7 4" stroke="#c8e8c8" stroke-width="0.9" fill="none"/><circle cx="1" cy="13" r="0.8" fill="#ccc"/><circle cx="2" cy="15.5" r="0.8" fill="#c8e8c8"/><circle cx="2.5" cy="9" r="0.7" fill="#c8e8c8"/><circle cx="6.5" cy="15.5" r="0.8" fill="#f0a000"/><circle cx="5" cy="13.5" r="0.6" fill="#f0a000"/><circle cx="10.8" cy="10.8" r="5.8" fill="#f00000"/><path d="M8.3 8.3L13.3 13.3M13.3 8.3L8.3 13.3" stroke="#fff" stroke-width="1.8"/></svg>
<svg style="position:absolute;left:408px;top:49px;" width="17" height="17" viewBox="0 0 17 17"><path d="M8 1.5L9.5 3.5H12L13.5 1.5L14.2 7L11.2 10.5L8 7Z" fill="#f2d9a2"/><circle cx="10.2" cy="5.5" r="0.7" fill="#000"/><circle cx="12.2" cy="5.5" r="0.7" fill="#000"/><path d="M2.5 11L7.5 8.5L9.5 9.5L12 12.5L14.5 15.5L13.5 16.5L10.5 13.5L3 12Z" fill="#f2a900"/><circle cx="5" cy="10.5" r="0.5" fill="#000"/><circle cx="7" cy="10" r="0.5" fill="#000"/><path d="M2 4.5Q3 5.5 4.5 5M5 3Q6.5 3 7 4" stroke="#c8e8c8" stroke-width="0.9" fill="none"/><circle cx="1" cy="13" r="0.8" fill="#ccc"/><circle cx="2" cy="15.5" r="0.8" fill="#c8e8c8"/><circle cx="2.5" cy="9" r="0.7" fill="#c8e8c8"/><circle cx="6.5" cy="15.5" r="0.8" fill="#f0a000"/><circle cx="5" cy="13.5" r="0.6" fill="#f0a000"/><path d="M3 11.5Q6 6 10.5 6Q15.5 6.5 15 11Q14.5 14.5 11.5 14.5" fill="none" stroke="#38b8ff" stroke-width="1.8"/><path d="M1 8.5L2.5 14.5L7.5 12.5Z" fill="#40c8ff"/></svg>
<svg style="position:absolute;left:355px;top:49px;" width="3" height="17" viewBox="0 0 3 17"><rect x="0" y="0" width="2" height="2" fill="#d8d0c0"/><rect x="0" y="5" width="2" height="2" fill="#d8d0c0"/><rect x="0" y="10" width="2" height="2" fill="#d8d0c0"/><rect x="0" y="15" width="2" height="2" fill="#d8d0c0"/></svg>
<svg style="position:absolute;left:430px;top:49px;" width="3" height="17" viewBox="0 0 3 17"><rect x="0" y="0" width="2" height="2" fill="#d8d0c0"/><rect x="0" y="5" width="2" height="2" fill="#d8d0c0"/><rect x="0" y="10" width="2" height="2" fill="#d8d0c0"/><rect x="0" y="15" width="2" height="2" fill="#d8d0c0"/></svg>
<svg style="position:absolute;left:436px;top:49px;" width="17" height="17" viewBox="0 0 17 17"><circle cx="2" cy="5" r="1.6" fill="#fff"/><circle cx="6.5" cy="5" r="1.6" fill="#fff"/><circle cx="11" cy="5" r="1.6" fill="#fff"/><rect x="6" y="8" width="10" height="6" rx="3" fill="#f5c000"/><circle cx="13" cy="11" r="2" fill="#000"/></svg>
<div style="position:absolute;left:456px;top:46px;width:21px;height:20px;background:#061628;border:1px solid #1c4c78"></div>
<svg style="position:absolute;left:459px;top:49px;" width="17" height="17" viewBox="0 0 17 17"><path d="M4 15L2 13L3.5 9L11 1.5L14.5 5L7 12.5Z" fill="#d08a4a"/><path d="M3.5 9L7 12.5" stroke="#000" stroke-width="0.8"/><path d="M0 16H5" stroke="#d08a4a" stroke-width="1"/></svg>
<svg style="position:absolute;left:481px;top:49px;" width="17" height="17" viewBox="0 0 17 17"><path d="M1 2.5H15M1 8H14.5Q16 8 16 10.5Q16 13 14.5 13H9M1 13.5H6" fill="none" stroke="#20d0e8" stroke-width="1.8"/><path d="M10 10.5L7.5 13L10 15.5Z" fill="#20d0e8"/></svg>
<svg style="position:absolute;left:504px;top:49px;" width="17" height="17" viewBox="0 0 17 17"><rect x="0" y="0" width="1.5" height="1.5" fill="#777"/><rect x="0" y="14.5" width="1.5" height="1.5" fill="#777"/><rect x="0" y="0" width="1.5" height="1.5" fill="#777"/><rect x="14.5" y="0" width="1.5" height="1.5" fill="#777"/><rect x="3" y="0" width="1.5" height="1.5" fill="#777"/><rect x="3" y="14.5" width="1.5" height="1.5" fill="#777"/><rect x="0" y="3" width="1.5" height="1.5" fill="#777"/><rect x="14.5" y="3" width="1.5" height="1.5" fill="#777"/><rect x="6" y="0" width="1.5" height="1.5" fill="#777"/><rect x="6" y="14.5" width="1.5" height="1.5" fill="#777"/><rect x="0" y="6" width="1.5" height="1.5" fill="#777"/><rect x="14.5" y="6" width="1.5" height="1.5" fill="#777"/><rect x="9" y="0" width="1.5" height="1.5" fill="#777"/><rect x="9" y="14.5" width="1.5" height="1.5" fill="#777"/><rect x="0" y="9" width="1.5" height="1.5" fill="#777"/><rect x="14.5" y="9" width="1.5" height="1.5" fill="#777"/><rect x="12" y="0" width="1.5" height="1.5" fill="#777"/><rect x="12" y="14.5" width="1.5" height="1.5" fill="#777"/><rect x="0" y="12" width="1.5" height="1.5" fill="#777"/><rect x="14.5" y="12" width="1.5" height="1.5" fill="#777"/><rect x="15" y="0" width="1.5" height="1.5" fill="#777"/><rect x="15" y="14.5" width="1.5" height="1.5" fill="#777"/><rect x="0" y="15" width="1.5" height="1.5" fill="#777"/><rect x="14.5" y="15" width="1.5" height="1.5" fill="#777"/><rect x="4" y="4" width="8" height="8" fill="none" stroke="#8a8a8a" stroke-width="1.8"/></svg>
<svg style="position:absolute;left:530px;top:49px;" width="17" height="17" viewBox="0 0 17 17"><path d="M6 15V1H12M9 1V15" stroke="#fff" stroke-width="1.8" fill="none"/><path d="M6 1.5A3.5 3.5 0 0 0 6 8.5Z" fill="#fff"/></svg>
<svg style="position:absolute;left:550px;top:49px;" width="3" height="17" viewBox="0 0 3 17"><rect x="0" y="0" width="2" height="2" fill="#d8d0c0"/><rect x="0" y="5" width="2" height="2" fill="#d8d0c0"/><rect x="0" y="10" width="2" height="2" fill="#d8d0c0"/><rect x="0" y="15" width="2" height="2" fill="#d8d0c0"/></svg>
<svg style="position:absolute;left:556px;top:49px;" width="17" height="17" viewBox="0 0 17 17"><rect x="0.5" y="7.5" width="5" height="4" fill="#d88f4c"/><rect x="6.5" y="7.5" width="5" height="4" fill="#d88f4c"/><rect x="0.5" y="12" width="5" height="4" fill="#d88f4c"/><rect x="6.5" y="12" width="5" height="4" fill="#d88f4c"/><path d="M12 0.5V8.5M8 4.5H16" stroke="#f5c000" stroke-width="2.2"/></svg>
<svg style="position:absolute;left:579px;top:49px;" width="17" height="17" viewBox="0 0 17 17"><circle cx="7" cy="10" r="6.5" fill="#30c040"/><path d="M9.5 7.5A3 3 0 1 0 9.5 12.5" fill="none" stroke="#fff" stroke-width="1.6"/><path d="M12 0.5V8.5M8 4.5H16" stroke="#f5c000" stroke-width="2.2"/></svg>
<svg style="position:absolute;left:600px;top:55px;" width="10" height="6" viewBox="0 0 10 6"><path d="M0.5 0.5H9.5L5 5.5Z" fill="#bcbcbc"/></svg>
<svg style="position:absolute;left:616px;top:49px;" width="3" height="17" viewBox="0 0 3 17"><rect x="0" y="0" width="2" height="2" fill="#d8d0c0"/><rect x="0" y="5" width="2" height="2" fill="#d8d0c0"/><rect x="0" y="10" width="2" height="2" fill="#d8d0c0"/><rect x="0" y="15" width="2" height="2" fill="#d8d0c0"/></svg>
<svg style="position:absolute;left:622px;top:49px;" width="17" height="17" viewBox="0 0 17 17"><ellipse cx="8.5" cy="9.5" rx="4.5" ry="5.5" fill="#30c040"/><circle cx="8.5" cy="3.5" r="2.5" fill="#30c040"/><path d="M2 5L5 7M15 5L12 7M1 10H4M16 10H13M2 15L5 12M15 15L12 12" stroke="#30c040" stroke-width="1.4"/><path d="M8.5 5V15" stroke="#000" stroke-width="0.8"/></svg>
<svg style="position:absolute;left:643px;top:55px;" width="10" height="6" viewBox="0 0 10 6"><path d="M0.5 0.5H9.5L5 5.5Z" fill="#bcbcbc"/></svg>
<svg style="position:absolute;left:661px;top:49px;" width="17" height="17" viewBox="0 0 17 17"><circle cx="8" cy="8" r="7.5" fill="#30c040"/><path d="M6 4.2L9.8 8L6 11.8" fill="none" stroke="#000" stroke-width="2"/></svg>
<svg style="position:absolute;left:681px;top:55px;" width="10" height="6" viewBox="0 0 10 6"><path d="M0.5 0.5H9.5L5 5.5Z" fill="#bcbcbc"/></svg>
<svg style="position:absolute;left:699px;top:49px;" width="17" height="17" viewBox="0 0 17 17"><circle cx="6.5" cy="6.5" r="6" fill="#30c040"/><path d="M5 3.5L8 6.5L5 9.5" fill="none" stroke="#000" stroke-width="1.6"/><rect x="7.5" y="11.5" width="8" height="4" fill="#000" stroke="#fff" stroke-width="1"/><rect x="8.5" y="12.5" width="3" height="2" fill="#ddd"/></svg>
<svg style="position:absolute;left:719px;top:55px;" width="10" height="6" viewBox="0 0 10 6"><path d="M0.5 0.5H9.5L5 5.5Z" fill="#bcbcbc"/></svg>
<svg style="position:absolute;left:737px;top:49px;" width="17" height="17" viewBox="0 0 17 17"><circle cx="6.5" cy="6.5" r="6" fill="#30c040"/><path d="M5 3.5L8 6.5L5 9.5" fill="none" stroke="#000" stroke-width="1.6"/><rect x="7" y="10" width="9" height="6" fill="#e01020"/><path d="M10 10V9H13V10" stroke="#e01020" fill="none"/></svg>
<svg style="position:absolute;left:757px;top:55px;" width="10" height="6" viewBox="0 0 10 6"><path d="M0.5 0.5H9.5L5 5.5Z" fill="#bcbcbc"/></svg>
<svg style="position:absolute;left:775px;top:49px;" width="17" height="17" viewBox="0 0 17 17"><circle cx="8" cy="8" r="6.8" fill="none" stroke="#e8141e" stroke-width="1.6"/><rect x="5" y="5" width="6" height="6" fill="#e8141e"/></svg>
<svg style="position:absolute;left:795px;top:55px;" width="10" height="6" viewBox="0 0 10 6"><path d="M0.5 0.5H9.5L5 5.5Z" fill="#bcbcbc"/></svg>
<svg style="position:absolute;left:815px;top:49px;" width="17" height="17" viewBox="0 0 17 17"><rect x="0.5" y="0.5" width="8.5" height="8.5" fill="#e8141e" stroke="#ff6070" stroke-width="0.8"/><path d="M7 8L15 12L7 16Z" fill="#30a040"/></svg>
<svg style="position:absolute;left:833px;top:55px;" width="10" height="6" viewBox="0 0 10 6"><path d="M0.5 0.5H9.5L5 5.5Z" fill="#bcbcbc"/></svg>
<svg style="position:absolute;left:849px;top:49px;" width="3" height="17" viewBox="0 0 3 17"><rect x="0" y="0" width="2" height="2" fill="#d8d0c0"/><rect x="0" y="5" width="2" height="2" fill="#d8d0c0"/><rect x="0" y="10" width="2" height="2" fill="#d8d0c0"/><rect x="0" y="15" width="2" height="2" fill="#d8d0c0"/></svg>
<svg style="position:absolute;left:855px;top:49px;" width="17" height="17" viewBox="0 0 17 17"><path d="M0.5 6H5L6.5 7.5H11V16H0.5Z" fill="#f5c000"/><path d="M3 10H16L12 16H0.5Z" fill="#f5c000"/><circle cx="11" cy="5" r="4.5" fill="#fff"/><circle cx="12" cy="4.5" r="3.5" fill="#4a78f8"/></svg>
<svg style="position:absolute;left:879px;top:49px;" width="17" height="17" viewBox="0 0 17 17"><circle cx="6.5" cy="6.5" r="5" fill="none" stroke="#f5c000" stroke-width="2.2"/><path d="M10 10L15 15" stroke="#f5c000" stroke-width="2.6"/></svg>
<svg style="position:absolute;left:899px;top:55px;" width="10" height="6" viewBox="0 0 10 6"><path d="M0.5 0.5H9.5L5 5.5Z" fill="#bcbcbc"/></svg>
<svg style="position:absolute;left:915px;top:49px;" width="3" height="17" viewBox="0 0 3 17"><rect x="0" y="0" width="2" height="2" fill="#d8d0c0"/><rect x="0" y="5" width="2" height="2" fill="#d8d0c0"/><rect x="0" y="10" width="2" height="2" fill="#d8d0c0"/><rect x="0" y="15" width="2" height="2" fill="#d8d0c0"/></svg>
<svg style="position:absolute;left:922px;top:49px;" width="17" height="17" viewBox="0 0 17 17"><path d="M3.5 6H11L14.5 9.5V16H3.5Z" fill="#cfcfcf"/><rect x="5.5" y="10.5" width="7" height="1.5" fill="#000"/><rect x="5.5" y="13" width="7" height="1.5" fill="#000"/><path d="M4.5 0V6M1.5 3.5L4.5 6.5L7.5 3.5" stroke="#f5c000" stroke-width="1.6" fill="none"/></svg>
<svg style="position:absolute;left:942px;top:55px;" width="10" height="6" viewBox="0 0 10 6"><path d="M0.5 0.5H9.5L5 5.5Z" fill="#bcbcbc"/></svg>
<svg style="position:absolute;left:960px;top:49px;" width="17" height="17" viewBox="0 0 17 17"><path d="M3.5 0.5H11L14.5 4V11H3.5Z" fill="#cfcfcf"/><rect x="5.5" y="5" width="7" height="1.5" fill="#000"/><rect x="5.5" y="7.5" width="7" height="1.5" fill="#000"/><path d="M4 16V9M1 12L4 9L7 12" stroke="#f5c000" stroke-width="1.6" fill="none"/></svg>
<svg style="position:absolute;left:980px;top:55px;" width="10" height="6" viewBox="0 0 10 6"><path d="M0.5 0.5H9.5L5 5.5Z" fill="#bcbcbc"/></svg>
<svg style="position:absolute;left:997px;top:49px;" width="17" height="17" viewBox="0 0 17 17"><circle cx="3.5" cy="3.5" r="3.3" fill="#5a78f0"/><path d="M15 11H5M9 7L5 11L9 15" stroke="#f5c000" stroke-width="2.2" fill="none"/></svg>
<svg style="position:absolute;left:1020px;top:49px;" width="17" height="17" viewBox="0 0 17 17"><path d="M1 11H11M7 7L11 11L7 15" stroke="#f5c000" stroke-width="2.2" fill="none"/><path d="M13 0V6M10.5 1.5L15.5 4.5M15.5 1.5L10.5 4.5" stroke="#4a78f8" stroke-width="1.2"/></svg>
<svg style="position:absolute;left:1044px;top:49px;" width="17" height="17" viewBox="0 0 17 17"><path d="M15.5 8H3M8.5 2.5L3 8L8.5 13.5" stroke="#f5c000" stroke-width="2.8" fill="none"/></svg>
<svg style="position:absolute;left:1065px;top:55px;" width="10" height="6" viewBox="0 0 10 6"><path d="M0.5 0.5H9.5L5 5.5Z" fill="#bcbcbc"/></svg>
<svg style="position:absolute;left:1082px;top:49px;" width="17" height="17" viewBox="0 0 17 17"><path d="M0.5 8H13M7.5 2.5L13 8L7.5 13.5" stroke="#5f6066" stroke-width="2.8" fill="none"/></svg>
<svg style="position:absolute;left:1104px;top:55px;" width="9" height="5" viewBox="0 0 9 5"><path d="M0.5 0.5H8.5L4.5 4.5Z" fill="#6a6a6a"/></svg>
<div style="position:absolute;left:1119px;top:48px;width:1px;height:18px;background:#444;"></div>
<svg style="position:absolute;left:1126px;top:49px;" width="17" height="17" viewBox="0 0 17 17"><rect x="1" y="5" width="12.5" height="11" fill="#fff" stroke="#6a80f8" stroke-width="2"/><rect x="1" y="5" width="12.5" height="3" fill="#6a80f8"/><path d="M11 0H15V7H11Z" fill="#30c040"/><path d="M13 7V11" stroke="#30c040" stroke-width="1.4"/></svg>
<svg style="position:absolute;left:1825px;top:49px;" width="17" height="17" viewBox="0 0 17 17"><circle cx="6.5" cy="6.5" r="5" fill="none" stroke="#8a8a8e" stroke-width="2"/><path d="M10 10L15.5 15.5" stroke="#8a8a8e" stroke-width="2.4"/></svg>
<svg style="position:absolute;left:1858px;top:51px;" width="3" height="13" viewBox="0 0 3 13"><rect x="0" y="0" width="2" height="2" fill="#d8d0c0"/><rect x="0" y="5" width="2" height="2" fill="#d8d0c0"/><rect x="0" y="10" width="2" height="2" fill="#d8d0c0"/></svg>
<svg style="position:absolute;left:1864px;top:49px;" width="17" height="17" viewBox="0 0 17 17"><rect x="0.5" y="6" width="5" height="4.5" fill="#e0e0e0"/><rect x="6.5" y="6" width="5" height="4.5" fill="#e0e0e0"/><rect x="0.5" y="11.5" width="5" height="4.5" fill="#e0e0e0"/><rect x="6.5" y="11.5" width="5" height="4.5" fill="#e0e0e0"/><path d="M12 0.5V8.5M8 4.5H16" stroke="#f5c000" stroke-width="2.2"/></svg>
<div style="position:absolute;left:1888px;top:48px;width:1px;height:18px;background:#444;"></div>
<div style="position:absolute;left:1893px;top:46px;width:21px;height:19px;background:#06182a;border:1px solid #1c4c78"></div>
<svg style="position:absolute;left:1896px;top:49px;" width="17" height="17" viewBox="0 0 17 17"><circle cx="7" cy="10" r="6" fill="#30c040"/><path d="M9.3 7.7A3 3 0 1 0 9.3 12.3" fill="none" stroke="#000" stroke-width="1.6"/><path d="M14 0.5V7Q14 10 11 10" fill="none" stroke="#20d0e8" stroke-width="2"/></svg>
<svg style="position:absolute;left:1550px;top:704px;" width="17" height="17" viewBox="0 0 17 17"><path d="M3 7A5 5 0 0 1 12.5 5" fill="none" stroke="#f5c000" stroke-width="2.4"/><path d="M10 1.5L14.5 5L10 7.5Z" fill="#f5c000"/><path d="M13 9A5 5 0 0 1 3.5 11" fill="none" stroke="#f5c000" stroke-width="2.4"/><path d="M6 14.5L1.5 11L6 8.5Z" fill="#f5c000"/></svg>
<svg style="position:absolute;left:1573px;top:704px;" width="17" height="17" viewBox="0 0 17 17"><rect x="1.5" y="2" width="12" height="1.8" fill="#6e6e72"/><rect x="5.5" y="0.5" width="4" height="2" fill="#6e6e72"/><path d="M2.5 4.5H12.5L11.5 15.5H3.5Z" fill="#6e6e72"/><path d="M5.5 7.5L9.5 11.5M9.5 7.5L5.5 11.5" stroke="#000" stroke-width="1.3"/></svg>
<svg style="position:absolute;left:1595px;top:704px;" width="17" height="17" viewBox="0 0 17 17"><path d="M1 1L8 8M8 1L1 8" stroke="#6e6e72" stroke-width="1.6"/><path d="M6 6L15 15M15 6L6 15" stroke="#6e6e72" stroke-width="1.6"/></svg>
<svg style="position:absolute;left:1620px;top:704px;" width="17" height="17" viewBox="0 0 17 17"><rect x="1" y="2" width="11" height="11" rx="1" fill="#e8404a"/></svg>
<div style="position:absolute;left:1641px;top:703px;width:1px;height:18px;background:#444;"></div>
<svg style="position:absolute;left:1648px;top:704px;" width="17" height="17" viewBox="0 0 17 17"><path d="M1 12L9 3Q10 2 11 3L14.5 6.5Q15.5 7.5 14.5 8.5L8 15H3Z" fill="#fff"/><path d="M10 15H16" stroke="#fff" stroke-width="1"/></svg>
<svg style="position:absolute;left:1671px;top:704px;" width="17" height="17" viewBox="0 0 17 17"><rect x="0.5" y="0.5" width="9" height="8" fill="none" stroke="#aaa" stroke-width="1"/><rect x="6" y="9" width="10" height="7" fill="#f5c000"/><path d="M8 9V6.5A3 3 0 0 1 14 6.5V9" fill="none" stroke="#f5c000" stroke-width="1.6"/></svg>
<svg style="position:absolute;left:1694px;top:704px;" width="17" height="17" viewBox="0 0 17 17"><path d="M1 2.5H15M1 8H14.5Q16 8 16 10.5Q16 13 14.5 13H9M1 13.5H6" fill="none" stroke="#20d0e8" stroke-width="1.8"/><path d="M10 10.5L7.5 13L10 15.5Z" fill="#20d0e8"/></svg>
<div style="position:absolute;left:1715px;top:701px;width:21px;height:19px;background:#06182a;border:1px solid #1c4c78"></div>
<div style="position:absolute;left:1738px;top:701px;width:21px;height:19px;background:#06182a;border:1px solid #1c4c78"></div>
<svg style="position:absolute;left:1718px;top:704px;" width="17" height="17" viewBox="0 0 17 17"><rect x="0.5" y="9.5" width="7" height="6" fill="#6a80f8"/><rect x="4" y="0.5" width="12" height="10" fill="#30c040"/><path d="M6.5 3L9 5L6.5 7M10 8H13" stroke="#fff" stroke-width="1.2" fill="none"/></svg>
<svg style="position:absolute;left:1741px;top:704px;" width="17" height="17" viewBox="0 0 17 17"><rect x="0.5" y="9.5" width="7" height="6" fill="#6a80f8"/><rect x="4" y="0.5" width="12" height="10" fill="#e0141e"/><path d="M6.5 3L9 5L6.5 7M10 8H13" stroke="#fff" stroke-width="1.2" fill="none"/></svg>
<div style="position:absolute;left:1764px;top:703px;width:1px;height:18px;background:#444;"></div>
<svg style="position:absolute;left:1771px;top:704px;" width="17" height="17" viewBox="0 0 17 17"><rect x="0.5" y="0.5" width="9" height="8" fill="none" stroke="#aaa" stroke-width="1.2"/><path d="M9 3H15V10H9Z" fill="#30c040"/><path d="M12 10V16" stroke="#30c040" stroke-width="1.4"/></svg>
<svg style="position:absolute;left:1797px;top:704px;" width="17" height="17" viewBox="0 0 17 17"><rect x="0.5" y="1.5" width="14" height="9" rx="1.5" fill="#6e6e72"/><rect x="2" y="3" width="11" height="6" fill="#555"/><path d="M4.5 14H10.5V12H4.5Z" fill="#6e6e72"/></svg>
<svg style="position:absolute;left:1817px;top:710px;" width="9" height="5" viewBox="0 0 9 5"><path d="M0.5 0.5H8.5L4.5 4.5Z" fill="#777"/></svg>
<svg style="position:absolute;left:1833px;top:704px;" width="17" height="17" viewBox="0 0 17 17"><rect x="0.5" y="4.5" width="12" height="11" fill="#fff" stroke="#6a80f8" stroke-width="2"/><rect x="0.5" y="4.5" width="12" height="3" fill="#6a80f8"/><path d="M13 0.5V7.5M9.5 4H16.5" stroke="#f5c000" stroke-width="2.2"/></svg>
<svg style="position:absolute;left:1853px;top:710px;" width="10" height="6" viewBox="0 0 10 6"><path d="M0.5 0.5H9.5L5 5.5Z" fill="#d0d0d0"/></svg>
<svg style="position:absolute;left:1873px;top:708px;" width="11" height="5" viewBox="0 0 11 5"><rect x="0.5" y="0.5" width="9" height="3" fill="none" stroke="#888"/></svg>
<svg style="position:absolute;left:1897px;top:706px;" width="12" height="12" viewBox="0 0 12 12"><rect x="0.5" y="0.5" width="9.5" height="9.5" fill="none" stroke="#888"/><path d="M0.5 2.5H10" stroke="#888"/></svg></body></html>
